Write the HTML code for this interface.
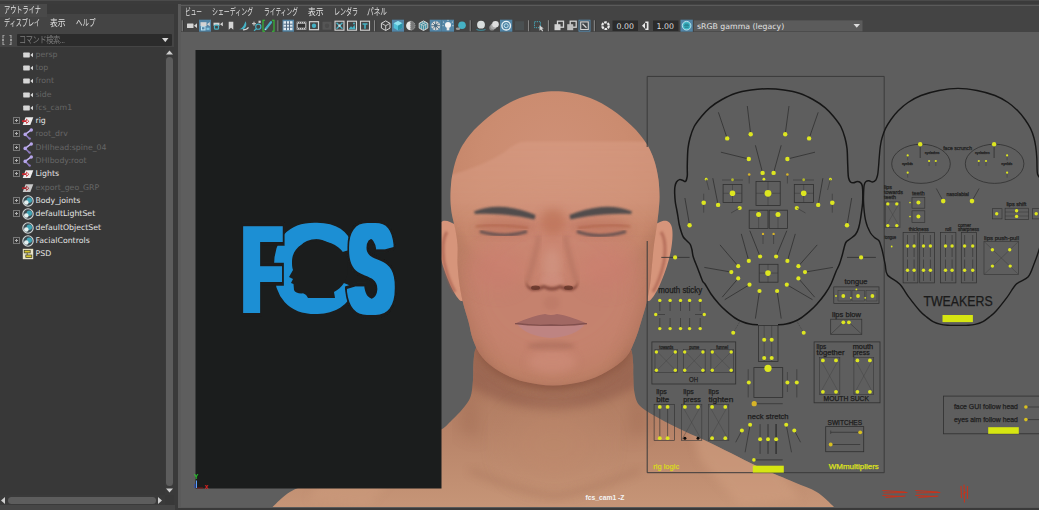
<!DOCTYPE html>
<html lang="ja">
<head>
<meta charset="utf-8">
<title>Maya FCS</title>
<style>
html,body{margin:0;padding:0;}
body{width:1039px;height:510px;overflow:hidden;background:#444444;position:relative;
 font-family:"Liberation Sans","Noto Sans CJK JP",sans-serif;font-size:11px;color:#dcdcdc;}
.abs{position:absolute;}
.jp{display:inline-block;transform-origin:0 50%;font-size:9px;white-space:nowrap;}
#topstrip{left:0;top:0;width:1039px;height:4px;background:#3b3b3b;}
#topline{left:0;top:0;width:1039px;height:1px;background:#4a4a4a;}
/* outliner */
#ol{left:0;top:4px;width:174px;height:501px;background:#444444;}
#oltabbar{left:0;top:0;width:174px;height:10.3px;background:#3a3a3a;}
#oltab{left:0;top:0;width:47px;height:13px;background:#494949;color:#e6e6e6;font-size:9.5px;line-height:13px;white-space:nowrap;}
#oltab span{position:absolute;left:3.5px;top:0;}
#olmenu{left:0;top:13px;width:174px;height:14px;font-size:9.5px;line-height:12px;color:#e0e0e0;white-space:nowrap;}
#olmenu span{position:absolute;top:0;}
#olsearch{left:17px;top:30px;width:155px;height:12px;background:#2b2b2b;border-radius:1px;}
#olsearch span{position:absolute;left:3px;top:0;font-size:9.5px;line-height:12px;color:#7d7d7d;white-space:nowrap;letter-spacing:-0.5px;}
#ollist{left:0;top:43px;width:174px;height:458px;background:#383838;}
.row{position:absolute;left:0;width:165px;height:13.3px;line-height:13.3px;font-size:7.8px;font-family:"DejaVu Sans","Liberation Sans",sans-serif;white-space:nowrap;}
.row .t{position:absolute;left:35.5px;top:0;}
.dim{color:#666666;}
.lit{color:#e4e4e4;}
.plus{position:absolute;left:12.500px;top:3px;width:5px;height:5px;border:1px solid #777;box-sizing:content-box;}
.plus:before{content:"";position:absolute;left:1px;top:2px;width:3px;height:1px;background:#b0b0b0;}
.plus:after{content:"";position:absolute;left:2px;top:1px;width:1px;height:3px;background:#b0b0b0;}
.ic{position:absolute;left:22px;top:1px;width:12px;height:12px;}
/* viewport panel */
#gap{left:174px;top:4px;width:4px;height:506px;background:#3a3a3a;}
#vp{left:178px;top:4px;width:861px;height:504px;background:#444444;border-bottom:1px solid #5a5a5a;box-sizing:border-box;}
#vptop{left:0;top:0.500px;width:861px;height:1.300px;background:#5a5a5a;}
#vpborderL{left:0;top:0;width:3px;height:504px;background:#5a5a5a;}
#vpmenu{left:5px;top:2px;height:12px;font-size:9.5px;line-height:12px;color:#e0e0e0;white-space:nowrap;}
#vpmenu span{position:absolute;top:0;}
#view{left:3px;top:28px;width:858px;height:475px;background:#5e5e5e;overflow:hidden;}
#bottom{left:0;top:505px;width:175px;height:5px;background:#464646;}
#bottom2{left:175px;top:508px;width:864px;height:2px;background:#3a3a3a;}
</style>
</head>
<body>
<div id="topstrip" class="abs"></div>
<div id="topline" class="abs"></div>

<div id="ol" class="abs">
  <div id="oltabbar" class="abs"></div>
  <div id="oltab" class="abs"><span class="jp" style="left:3.5px;transform:scaleX(0.685);">アウトライナ</span></div>
  <div id="olmenu" class="abs"><span class="jp" style="left:3.5px;transform:scaleX(0.676);">ディスプレイ</span><span class="jp" style="left:49.5px;transform:scaleX(0.861);">表示</span><span class="jp" style="left:75.5px;transform:scaleX(0.722);">ヘルプ</span></div>
  <svg class="abs" style="left:1px;top:29px" width="14" height="14" viewBox="0 0 14 14"><path d="M3.5 2.5h-1.5v3M2 8.5v3h1.5M8.500 2.500h1.500v3M10 8.500v3h-1.500" fill="none" stroke="#9a9a9a" stroke-width="1.2"/><path d="M1 6h2v2h-2zM9 6h2v2h-2z" fill="#9a9a9a"/></svg>
  <div id="olsearch" class="abs"><span class="jp" style="left:2px;transform:scaleX(0.80);font-size:9px">コマンド検索...</span>
    <svg class="abs" style="right:3.5px;top:4px" width="6.5" height="4.2" viewBox="0 0 8 5"><path d="M0 0h8L4 5z" fill="#d8d8d8"/></svg>
  </div>
  <div id="ollist" class="abs">
    <svg width="0" height="0" style="position:absolute"><defs>
<symbol id="i-cam" viewBox="0 0 12 12"><rect x="1.2" y="3.6" width="6.6" height="4.8" rx="0.6" fill="#d6d6d6"/><path d="M8.300 6L11 3.800v4.400z" fill="#d6d6d6"/></symbol>
<symbol id="i-xf" viewBox="0 0 12 12"><path d="M3.600 2.200H11.300L8.300 10H0.700z" fill="#ececec"/><path d="M0 5.300h4.200v-1.800l3 2.700-3 2.700v-1.800h-4.200z" fill="#c8242c"/><circle cx="5.300" cy="6.200" r="0.900" fill="#ececec"/></symbol>
<symbol id="i-xfd" viewBox="0 0 12 12"><path d="M3.600 2.200H11.300L8.300 10H0.700z" fill="#c9c9c9"/><path d="M0 5.300h4.200v-1.800l3 2.700-3 2.700v-1.800h-4.200z" fill="#a3242a"/><circle cx="5.300" cy="6.200" r="0.900" fill="#c9c9c9"/></symbol>
<symbol id="i-jt" viewBox="0 0 12 12"><path d="M9.300 1.800L3.200 6.400 7.600 10.800" fill="none" stroke="#8d7ac0" stroke-width="1.600"/><path d="M9.300 1.800L3.200 6.400" stroke="#c9bdf0" stroke-width="1.100"/><circle cx="9.300" cy="2" r="1.700" fill="#b6a5ea"/><circle cx="3.200" cy="6.400" r="1.800" fill="#b6a5ea"/><circle cx="7.700" cy="10.600" r="1.200" fill="#8d7ac0"/></symbol>
<symbol id="i-set" viewBox="0 0 12 12"><circle cx="6" cy="6" r="5.200" fill="#3b4a50" stroke="#d2d6d6" stroke-width="1.100"/><circle cx="7.300" cy="5.200" r="2.700" fill="#3fa3b4"/><circle cx="4.300" cy="7.500" r="2.300" fill="#e4f0f0"/></symbol>
<symbol id="i-psd" viewBox="0 0 12 12"><rect x="0.800" y="0.800" width="10.400" height="10.400" fill="#e8e4c8"/><rect x="2.200" y="2.300" width="6" height="2.600" fill="#d8c62a" stroke="#3a3a2a" stroke-width="0.700"/><rect x="3.800" y="7" width="6" height="2.600" fill="#d8c62a" stroke="#3a3a2a" stroke-width="0.700"/><path d="M5.200 4.900v2.100" stroke="#3a3a2a" stroke-width="0.700"/></symbol>
</defs></svg>
<div class="row dim" style="top:0.65px"><svg class="ic"><use href="#i-cam"/></svg><span class="t">persp</span></div>
    <div class="row dim" style="top:13.95px"><svg class="ic"><use href="#i-cam"/></svg><span class="t">top</span></div>
    <div class="row dim" style="top:27.25px"><svg class="ic"><use href="#i-cam"/></svg><span class="t">front</span></div>
    <div class="row dim" style="top:40.55px"><svg class="ic"><use href="#i-cam"/></svg><span class="t">side</span></div>
    <div class="row dim" style="top:53.85px"><svg class="ic"><use href="#i-cam"/></svg><span class="t">fcs_cam1</span></div>
    <div class="row lit" style="top:67.15px"><i class="plus"></i><svg class="ic"><use href="#i-xf"/></svg><span class="t">rig</span></div>
    <div class="row dim" style="top:80.45px"><i class="plus"></i><svg class="ic"><use href="#i-jt"/></svg><span class="t">root_drv</span></div>
    <div class="row dim" style="top:93.75px"><i class="plus"></i><svg class="ic"><use href="#i-jt"/></svg><span class="t">DHIhead:spine_04</span></div>
    <div class="row dim" style="top:107.05px"><i class="plus"></i><svg class="ic"><use href="#i-jt"/></svg><span class="t">DHIbody:root</span></div>
    <div class="row lit" style="top:120.35px"><i class="plus"></i><svg class="ic"><use href="#i-xf"/></svg><span class="t">Lights</span></div>
    <div class="row dim" style="top:133.65px"><svg class="ic"><use href="#i-xfd"/></svg><span class="t">export_geo_GRP</span></div>
    <div class="row lit" style="top:146.95px"><i class="plus"></i><svg class="ic"><use href="#i-set"/></svg><span class="t">Body_joints</span></div>
    <div class="row lit" style="top:160.25px"><i class="plus"></i><svg class="ic"><use href="#i-set"/></svg><span class="t">defaultLightSet</span></div>
    <div class="row lit" style="top:173.55px"><svg class="ic"><use href="#i-set"/></svg><span class="t">defaultObjectSet</span></div>
    <div class="row lit" style="top:186.85px"><i class="plus"></i><svg class="ic"><use href="#i-set"/></svg><span class="t">FacialControls</span></div>
    <div class="row lit" style="top:200.15px"><svg class="ic"><use href="#i-psd"/></svg><span class="t">PSD</span></div>
<div class="abs" style="left:165px;top:0;width:9px;height:448px;background:#3a3a3a"></div>
    <svg class="abs" style="left:166px;top:3px" width="7" height="5" viewBox="0 0 7 5"><path d="M0 4.500L3.500 0.500 7 4.500z" fill="#cfcfcf"/></svg>
    <div class="abs" style="left:166px;top:10px;width:7px;height:429px;background:#5d5d5d;border-radius:3.5px"></div>
    <svg class="abs" style="left:166px;top:441px" width="7" height="5" viewBox="0 0 7 5"><path d="M0 0.500L3.500 4.500 7 0.500z" fill="#cfcfcf"/></svg>
    <div class="abs" style="left:0;top:448px;width:165px;height:10px;background:#3a3a3a"></div>
    <svg class="abs" style="left:1px;top:449.500px" width="4" height="7" viewBox="0 0 4 7"><path d="M4 0L0 3.500 4 7z" fill="#cfcfcf"/></svg>
    <div class="abs" style="left:8px;top:449.500px;width:148px;height:7px;background:#5d5d5d;border-radius:3.5px"></div>
    <svg class="abs" style="left:158px;top:449.500px" width="4" height="7" viewBox="0 0 4 7"><path d="M0 0L4 3.500 0 7z" fill="#cfcfcf"/></svg>
  </div>
</div>

<div id="gap" class="abs"></div>
<div id="vp" class="abs">
  <div id="vpborderL" class="abs"></div><div id="vptop" class="abs"></div>
  <div id="vpmenu" class="abs"><span class="jp" style="left:1.5px;transform:scaleX(0.630);">ビュー</span><span class="jp" style="left:29.3px;transform:scaleX(0.659);">シェーディング</span><span class="jp" style="left:80.5px;transform:scaleX(0.639);">ライティング</span><span class="jp" style="left:124.5px;transform:scaleX(0.861);">表示</span><span class="jp" style="left:150.5px;transform:scaleX(0.667);">レンダラ</span><span class="jp" style="left:183.8px;transform:scaleX(0.741);">パネル</span></div>
  <!-- TB0 --><svg class="abs" style="left:0;top:13.5px" width="861" height="15" viewBox="0 0 861 15"><path d="M4.3 2.2v11" stroke="#858585" stroke-width="1.2"/><path d="M5.3 2.2v11" stroke="#333333" stroke-width="0.8"/><g transform="translate(14.0 7.7)"><rect x="-5" y="-2.2" width="6.500" height="4.600" rx="0.500" fill="#d4d4d4"/><path d="M2 0L5 -2.400v4.800z" fill="#d4d4d4"/></g><rect x="21.0" y="1.7" width="12.0" height="12" fill="#5285a6"/><g transform="translate(27.0 7.7)"><rect x="-4.500" y="-3.500" width="6" height="4" fill="#d4d4d4"/><path d="M2 -1.500L4.800 -3.600v4.200z" fill="#d4d4d4"/><rect x="-3.500" y="1" width="3.500" height="3.200" fill="none" stroke="#bfe3f2" stroke-width="1"/><rect x="1.500" y="2" width="3" height="2.200" fill="#7fc6e0"/></g><g transform="translate(40.0 7.7)"><rect x="-4.500" y="-3" width="6" height="3" fill="#d4d4d4"/><path d="M2 -1.500L4.800 -3.600v4.200z" fill="#d4d4d4"/><rect x="-3.500" y="-0.500" width="4" height="4" rx="1" fill="#444" stroke="#45b1c4" stroke-width="1.200"/></g><g transform="translate(53.0 7.7)"><path d="M-2.300 -4h4.600v8l-2.300-2-2.300 2z" fill="#d4d4d4"/></g><g transform="translate(66.0 7.7)"><path d="M-5 3.500C-2 3 0 0 1.500-4.500 3 -2 2.500 1.500 -0.500 3.500z" fill="#45b1c4"/><path d="M-1 4.200c2.500 0 4.500-1 5.500-2.500" stroke="#d4d4d4" stroke-width="1.100" fill="none"/></g><g transform="translate(79.0 7.7)"><circle cx="1.300" cy="1" r="2.600" fill="none" stroke="#45b1c4" stroke-width="1.100"/><path d="M-0.500 3L-3 5" stroke="#45b1c4" stroke-width="1.200"/><path d="M-5-2h4M-3-4v4" stroke="#d4d4d4" stroke-width="1"/><rect x="1.500" y="-5" width="2.200" height="2.200" fill="#d4d4d4"/></g><g transform="translate(90.5 7.7)"><path d="M-3.500 -5.500h-2v11h2M3.500 -5.500h2v11h-2" fill="none" stroke="#35c435" stroke-width="1.100"/><path d="M-3 3.500L2.500 -3.500" stroke="#45b1c4" stroke-width="2.200" stroke-linecap="round"/><path d="M-3.500 4.300l0.800-1.200" stroke="#ddd" stroke-width="1"/></g><path d="M100.0 2.2v11" stroke="#858585" stroke-width="1.2"/><path d="M101.0 2.2v11" stroke="#333333" stroke-width="0.8"/><rect x="104.5" y="1.7" width="11.5" height="12" fill="#5285a6"/><g transform="translate(110.0 7.7)"><rect x="-4.500" y="-4.500" width="9" height="9" fill="#dfeaf0"/><path d="M-4.500 -1.500h9M-4.500 1.500h9M-1.500 -4.500v9M1.500 -4.500v9" stroke="#44607a" stroke-width="0.900"/></g><g transform="translate(123.5 7.7)"><rect x="-4.800" y="-4" width="9.600" height="8" fill="#cfcfcf"/><rect x="-3.800" y="-2" width="7.600" height="4" fill="#333"/><path d="M-4.500 -3h9M-4.500 3h9" stroke="#444" stroke-width="0.800" stroke-dasharray="1 1"/></g><g transform="translate(136.0 7.7)"><rect x="-4.500" y="-4" width="9" height="8" fill="none" stroke="#d4d4d4" stroke-width="1.200"/><circle r="2.200" fill="#45b1c4"/></g><g transform="translate(149.0 7.7)"><rect x="-4.500" y="-4" width="9" height="8" fill="#555"/><circle r="2.200" fill="#4b4b4b"/></g><g transform="translate(161.5 7.7)"><rect x="-4.500" y="-4.500" width="9" height="9" fill="none" stroke="#d4d4d4" stroke-width="1.100"/><path d="M-3 -3L3 3M3 -3L-3 3" stroke="#45b1c4" stroke-width="1.400"/><circle r="1.200" fill="#d4d4d4"/></g><g transform="translate(174.0 7.7)"><rect x="-4.500" y="-4.500" width="9" height="9" fill="none" stroke="#d4d4d4" stroke-width="1.100"/><path d="M-3.500 3.500L-1 0.500 0.500 2 2.500 -1 3.500 3.500z" fill="#45b1c4"/><circle cx="2" cy="-2.200" r="1" fill="#45b1c4"/></g><g transform="translate(187.0 7.7)"><rect x="-4.500" y="-4.500" width="9" height="9" fill="none" stroke="#d4d4d4" stroke-width="1.100"/><path d="M-2.500 -2.500h5v1.500h-1.700v4h-1.600v-4h-1.700z" fill="#45b1c4"/></g><path d="M196.6 2.2v11" stroke="#858585" stroke-width="1.2"/><path d="M197.6 2.2v11" stroke="#333333" stroke-width="0.8"/><g transform="translate(207.7 7.7)"><path d="M0 -4.800L4.300 -2.400V2.400L0 4.800-4.300 2.400V-2.400z" fill="none" stroke="#d4d4d4" stroke-width="1"/><path d="M-4.300 -2.400L0 0 4.300 -2.400M0 0V4.800" fill="none" stroke="#d4d4d4" stroke-width="0.900"/></g><rect x="214.0" y="1.7" width="12.0" height="12" fill="#5285a6"/><g transform="translate(220.0 7.7)"><path d="M0 -4.800L4.300 -2.400V2.400L0 4.800-4.300 2.400V-2.400z" fill="#4fc0d8"/><path d="M0 -4.800L4.300 -2.400 0 0 -4.300 -2.400z" fill="#8fe0ee"/><path d="M0 0L4.300 -2.400V2.400L0 4.800z" fill="#2c93a8"/></g><g transform="translate(232.6 7.7)"><path d="M0 -4.500A4.500 4.500 0 0 0 0 4.500z" fill="#e6e6e6"/><path d="M0 -4.500A4.500 4.500 0 0 1 0 4.500z" fill="#777" stroke="#cfcfcf" stroke-width="0.600" stroke-dasharray="1 1"/></g><g transform="translate(245.5 7.7)"><path d="M0 -4.800L4.300 -2.400V2.400L0 4.800-4.300 2.400V-2.400z" fill="#3b8ea0" stroke="#d4d4d4" stroke-width="1"/><path d="M-4.300 -2.400L0 0 4.300 -2.400M0 0V4.800M-2.150 -3.600L2.150 -1.200V3.600M2.150 -3.600L-2.150 -1.200V3.600" fill="none" stroke="#d4d4d4" stroke-width="0.700"/></g><rect x="251.7" y="1.7" width="12.1" height="12" fill="#5285a6"/><g transform="translate(257.7 7.7)"><circle r="4.500" fill="#d8d8d8"/><path d="M-4.500 0h9M0 -4.500v9M-3.200 -3.200l6.400 6.400M3.200 -3.200l-6.400 6.400" stroke="#4a6a80" stroke-width="0.900"/><circle r="1.600" fill="#4a6a80"/></g><rect x="263.8" y="1.7" width="12.2" height="12" fill="#5285a6"/><g transform="translate(270.0 7.7)"><circle cy="-0.800" r="3" fill="#f4f4f4"/><rect x="-1.300" y="2" width="2.600" height="2.600" fill="#e8e8e8"/><path d="M-5 -4l1.200 1M5 -4l-1.200 1M0 -5.800v1.200M-5.500 0h1.200M5.500 0h-1.200" stroke="#e8e8e8" stroke-width="0.800"/></g><g transform="translate(283.0 7.7)"><circle cx="1" cy="-0.500" r="3.800" fill="#45b1c4"/><ellipse cx="-3" cy="3" rx="2.200" ry="1.300" fill="#9a9a9a"/></g><path d="M292.3 2.2v11" stroke="#858585" stroke-width="1.2"/><path d="M293.3 2.2v11" stroke="#333333" stroke-width="0.8"/><g transform="translate(303.0 7.7)"><circle cy="-1" r="3.900" fill="#d9dede"/><path d="M-4.500 3.500c2 1.500 7 1.500 9 0" stroke="#3f7f8c" stroke-width="1.300" fill="none"/></g><g transform="translate(316.0 7.7)"><circle cx="-2" cy="2" r="2.800" fill="#8a8a8a"/><circle cx="-0.500" cy="0.500" r="3" fill="#aaa"/><circle cx="1.500" cy="-1.500" r="3.300" fill="#dedede"/></g><rect x="322.0" y="1.7" width="12.3" height="12" fill="#5285a6"/><g transform="translate(328.2 7.7)"><circle r="4.300" fill="none" stroke="#e8f2f6" stroke-width="1.300"/><circle r="2" fill="none" stroke="#bfe0ec" stroke-width="1"/></g><g transform="translate(341.5 7.7)"><rect x="-4.500" y="-4.500" width="9" height="9" fill="#4a5052"/></g><path d="M350.6 2.2v11" stroke="#858585" stroke-width="1.2"/><path d="M351.6 2.2v11" stroke="#333333" stroke-width="0.8"/><g transform="translate(361.0 7.7)"><rect x="-4.500" y="-4" width="6" height="6" fill="none" stroke="#45b1c4" stroke-width="0.900" stroke-dasharray="1.300 0.900"/><path d="M0.500 -0.500l0 5.500 1.400-1.300 1.300 2 0.900-0.600-1.200-2 1.800-0.300z" fill="#d4d4d4"/></g><path d="M370.5 2.2v11" stroke="#858585" stroke-width="1.2"/><path d="M371.5 2.2v11" stroke="#333333" stroke-width="0.8"/><g transform="translate(381.0 7.7)"><rect x="-1.500" y="-4.500" width="6" height="6" fill="none" stroke="#d4d4d4" stroke-width="1.300"/><rect x="-4.500" y="-1.500" width="6" height="6" fill="#d4d4d4"/></g><g transform="translate(393.7 7.7)"><rect x="-1.500" y="-4.500" width="6" height="6" fill="none" stroke="#d4d4d4" stroke-width="1.300"/><rect x="-4.500" y="-1.500" width="6" height="6" fill="#bdbdbd"/></g><g transform="translate(406.5 7.7)"><rect x="-5.500" y="-5.500" width="11" height="11" fill="#3f4448" stroke="#5a8fb4" stroke-width="0.900"/><rect x="-3.800" y="-3.800" width="7.600" height="7.600" fill="none" stroke="#d4d4d4" stroke-width="1.100"/><path d="M-2 -2L2 2" stroke="#d4d4d4" stroke-width="1.300"/></g><path d="M416.4 2.2v11" stroke="#858585" stroke-width="1.2"/><path d="M417.4 2.2v11" stroke="#333333" stroke-width="0.8"/><g transform="translate(427.5 7.7)"><circle r="3.300" fill="none" stroke="#ececec" stroke-width="2.200" stroke-dasharray="2.600 0.850"/></g><rect x="434.5" y="2.5" width="25.500" height="10.500" fill="#2b2b2b"/><text x="447.2" y="10.6" font-size="7.800" fill="#dedede" text-anchor="middle" font-family="DejaVu Sans,Liberation Sans,sans-serif">0.00</text><g transform="translate(467.5 7.7)"><path d="M-3.500 0L-0.500 -3v6z" fill="#e8e8e8"/><path d="M-0.200 -4.200h3.200v8.400h-3.200v-1.500h1.500v-5.400h-1.500z" fill="#e8e8e8"/></g><rect x="475.0" y="2.5" width="25.500" height="10.500" fill="#2b2b2b"/><text x="487.2" y="10.6" font-size="7.800" fill="#dedede" text-anchor="middle" font-family="DejaVu Sans,Liberation Sans,sans-serif">1.00</text><rect x="502.5" y="1.7" width="12.3" height="12" fill="#5285a6"/><g transform="translate(508.6 7.7)"><circle r="4.300" fill="#3fb6c6" stroke="#bfeaf2" stroke-width="0.900"/><path d="M-2.500 0h5M-2 -1.500h4M-2 1.500h4" stroke="#1e6a78" stroke-width="0.800"/></g><rect x="516.0" y="2.4" width="168.500" height="11" fill="#5b5b5b"/><text x="519.0" y="10.5" font-size="7.800" fill="#e2e2e2" font-family="DejaVu Sans,Liberation Sans,sans-serif">sRGB gamma (legacy)</text><path d="M675.5 6.1h6.500l-3.250 3.600z" fill="#dcdcdc"/></svg><!-- TB1 -->
  <div id="view" class="abs">
    <!-- V0 --><svg class="abs" style="left:0;top:0" width="858" height="475" viewBox="181 32 858 475">
<defs>
<filter id="b2" x="-20%" y="-20%" width="140%" height="140%"><feGaussianBlur stdDeviation="2"/></filter>
<filter id="b1" x="-20%" y="-20%" width="140%" height="140%"><feGaussianBlur stdDeviation="1"/></filter>
<filter id="b05" x="-20%" y="-20%" width="140%" height="140%"><feGaussianBlur stdDeviation="0.6"/></filter>
<filter id="b4" x="-30%" y="-30%" width="160%" height="160%"><feGaussianBlur stdDeviation="4"/></filter>
<filter id="b8" x="-40%" y="-40%" width="180%" height="180%"><feGaussianBlur stdDeviation="8"/></filter>
<filter id="b14" x="-50%" y="-50%" width="200%" height="200%"><feGaussianBlur stdDeviation="14"/></filter>
<radialGradient id="gHead" cx="555" cy="165" r="125" gradientUnits="userSpaceOnUse" gradientTransform="translate(0 0)">
<stop offset="0" stop-color="#cf9178"/><stop offset="0.6" stop-color="#cb8c70"/><stop offset="0.9" stop-color="#c5866a"/><stop offset="1" stop-color="#bb7f64"/></radialGradient>
<linearGradient id="gBody" x1="0" y1="380" x2="0" y2="506" gradientUnits="userSpaceOnUse"><stop offset="0" stop-color="#af7a60"/><stop offset="0.4" stop-color="#b78368"/><stop offset="1" stop-color="#c69577"/></linearGradient>
<linearGradient id="gBand" x1="0" y1="141" x2="0" y2="236" gradientUnits="userSpaceOnUse"><stop offset="0" stop-color="#d79b83" stop-opacity="0.6"/><stop offset="0.6" stop-color="#d79b83" stop-opacity="0.5"/><stop offset="1" stop-color="#d79b83" stop-opacity="0"/></linearGradient>
<clipPath id="cHead"><path d="M555.0 91.3C560.0 91.3 565.2 91.7 570.0 92.5C574.8 93.3 579.7 94.7 584.0 96.0C588.3 97.3 592.2 98.8 596.0 100.5C599.8 102.2 603.5 104.4 607.0 106.5C610.5 108.6 613.7 110.8 617.0 113.3C620.3 115.8 623.8 118.7 627.0 121.5C630.2 124.3 633.2 126.9 636.0 130.0C638.8 133.1 641.7 136.7 644.0 140.0C646.3 143.3 648.2 146.2 650.0 150.0C651.8 153.8 653.6 158.0 655.0 163.0C656.4 168.0 657.8 174.3 658.5 180.0C659.2 185.7 659.5 191.7 659.5 197.0C659.5 202.3 659.0 206.8 658.5 212.0C658.0 217.2 657.2 222.5 656.5 228.0C655.8 233.5 654.8 238.8 654.0 245.0C653.2 251.2 652.7 258.3 652.0 265.0C651.3 271.7 650.9 278.7 650.0 285.0C649.1 291.3 648.0 296.8 646.5 303.0C645.0 309.2 642.9 315.8 641.0 322.0C639.1 328.2 637.5 334.2 635.0 340.0C632.5 345.8 630.7 351.8 626.0 357.0C621.3 362.2 614.2 367.4 607.0 371.5C599.8 375.6 592.0 379.2 583.0 381.5C574.0 383.8 562.9 385.5 553.0 385.5C543.1 385.5 532.5 383.8 523.6 381.5C514.7 379.2 506.5 375.6 499.6 371.5C492.7 367.4 486.5 362.2 482.1 357.0C477.7 351.8 475.3 345.8 473.1 340.0C470.8 334.2 470.3 328.2 468.6 322.0C466.9 315.8 464.6 309.2 463.1 303.0C461.6 296.8 460.5 291.3 459.6 285.0C458.7 278.7 457.9 271.7 457.6 265.0C457.2 258.3 457.9 251.2 457.5 245.0C457.1 238.8 456.0 233.5 455.0 228.0C454.0 222.5 452.2 217.2 451.5 212.0C450.8 206.8 450.5 202.3 450.5 197.0C450.5 191.7 450.8 185.7 451.5 180.0C452.2 174.3 453.6 168.0 455.0 163.0C456.4 158.0 458.2 153.8 460.0 150.0C461.8 146.2 463.7 143.3 466.0 140.0C468.3 136.7 471.2 133.1 474.0 130.0C476.8 126.9 479.8 124.3 483.0 121.5C486.2 118.7 489.7 115.8 493.0 113.3C496.3 110.8 499.5 108.6 503.0 106.5C506.5 104.4 510.2 102.2 514.0 100.5C517.8 98.8 521.7 97.3 526.0 96.0C530.3 94.7 535.2 93.3 540.0 92.5C544.8 91.7 550.0 91.3 555.0 91.3z"/></clipPath>
<clipPath id="cBody"><path d="M268.6 512.0C269.6 510.8 271.0 508.3 274.6 505.0C278.1 501.7 283.5 495.8 289.9 492.0C296.3 488.2 303.9 485.8 312.9 482.0C321.8 478.2 334.2 473.2 343.6 469.0C352.9 464.8 360.5 460.7 369.0 456.5C377.5 452.3 385.7 447.9 394.6 443.7C403.5 439.4 415.0 433.3 422.6 431.0C430.2 428.7 435.1 431.8 440.0 430.0C444.9 428.2 448.2 423.6 452.0 420.0C455.8 416.4 459.9 412.3 463.0 408.5C466.1 404.7 468.8 401.8 470.5 397.0C472.2 392.2 472.5 385.8 473.0 380.0C473.5 374.2 473.0 367.3 473.5 362.0C474.0 356.7 473.9 352.5 476.0 348.0C478.1 343.5 473.1 343.0 486.0 335.0C498.9 327.0 531.0 300.0 553.3 300.0C575.6 300.0 607.1 327.0 620.0 335.0C632.9 343.0 628.3 343.5 630.5 348.0C632.7 352.5 632.5 357.3 633.0 362.0C633.5 366.7 633.0 370.8 633.3 376.0C633.5 381.2 633.4 388.0 634.5 393.0C635.6 398.0 636.0 401.8 640.0 406.0C644.0 410.2 651.2 413.8 658.5 418.0C665.8 422.2 675.1 426.7 684.0 431.0C692.9 435.3 703.1 439.4 712.0 443.7C720.9 447.9 729.1 452.3 737.6 456.5C746.1 460.7 753.6 464.8 763.0 469.0C772.4 473.2 784.8 478.2 793.7 482.0C802.7 485.8 810.3 488.2 816.7 492.0C823.1 495.8 828.5 501.7 832.0 505.0C835.5 508.3 837.0 510.8 838.0 512.0z"/></clipPath>
</defs>
<rect x="181" y="32" width="858" height="476" fill="#5e5e5e"/>
<path d="M268.6 512.0C269.6 510.8 271.0 508.3 274.6 505.0C278.1 501.7 283.5 495.8 289.9 492.0C296.3 488.2 303.9 485.8 312.9 482.0C321.8 478.2 334.2 473.2 343.6 469.0C352.9 464.8 360.5 460.7 369.0 456.5C377.5 452.3 385.7 447.9 394.6 443.7C403.5 439.4 415.0 433.3 422.6 431.0C430.2 428.7 435.1 431.8 440.0 430.0C444.9 428.2 448.2 423.6 452.0 420.0C455.8 416.4 459.9 412.3 463.0 408.5C466.1 404.7 468.8 401.8 470.5 397.0C472.2 392.2 472.5 385.8 473.0 380.0C473.5 374.2 473.0 367.3 473.5 362.0C474.0 356.7 473.9 352.5 476.0 348.0C478.1 343.5 473.1 343.0 486.0 335.0C498.9 327.0 531.0 300.0 553.3 300.0C575.6 300.0 607.1 327.0 620.0 335.0C632.9 343.0 628.3 343.5 630.5 348.0C632.7 352.5 632.5 357.3 633.0 362.0C633.5 366.7 633.0 370.8 633.3 376.0C633.5 381.2 633.4 388.0 634.5 393.0C635.6 398.0 636.0 401.8 640.0 406.0C644.0 410.2 651.2 413.8 658.5 418.0C665.8 422.2 675.1 426.7 684.0 431.0C692.9 435.3 703.1 439.4 712.0 443.7C720.9 447.9 729.1 452.3 737.6 456.5C746.1 460.7 753.6 464.8 763.0 469.0C772.4 473.2 784.8 478.2 793.7 482.0C802.7 485.8 810.3 488.2 816.7 492.0C823.1 495.8 828.5 501.7 832.0 505.0C835.5 508.3 837.0 510.8 838.0 512.0z" fill="url(#gBody)"/>
<g clip-path="url(#cBody)">
<path d="M470 340Q480 372 520 390Q553 399 586 390Q626 372 636 340L640 385Q600 408 553 411Q506 408 466 385z" fill="#8e5a48" opacity="0.55" filter="url(#b4)"/>
<ellipse cx="554" cy="445" rx="45" ry="35" fill="#bd886c" opacity="0.5" filter="url(#b14)"/>
<path d="M470 380L480 440 460 430z" fill="#96624c" opacity="0.4" filter="url(#b8)"/>
<path d="M638 380L628 440 648 430z" fill="#96624c" opacity="0.4" filter="url(#b8)"/>
<path d="M690 425L780 470 800 500 740 506 700 460z" fill="#cf9d7f" opacity="0.6" filter="url(#b4)"/>
<path d="M418 425L328 470 308 500 368 506 408 460z" fill="#cf9d7f" opacity="0.45" filter="url(#b4)"/>
<path d="M470 470Q520 492 554 496Q588 492 640 470" fill="none" stroke="#a06c54" stroke-width="5" opacity="0.45" filter="url(#b4)"/>
</g>
<g clip-path="url(#cBody)"><path d="M555.0 91.3C560.0 91.3 565.2 91.7 570.0 92.5C574.8 93.3 579.7 94.7 584.0 96.0C588.3 97.3 592.2 98.8 596.0 100.5C599.8 102.2 603.5 104.4 607.0 106.5C610.5 108.6 613.7 110.8 617.0 113.3C620.3 115.8 623.8 118.7 627.0 121.5C630.2 124.3 633.2 126.9 636.0 130.0C638.8 133.1 641.7 136.7 644.0 140.0C646.3 143.3 648.2 146.2 650.0 150.0C651.8 153.8 653.6 158.0 655.0 163.0C656.4 168.0 657.8 174.3 658.5 180.0C659.2 185.7 659.5 191.7 659.5 197.0C659.5 202.3 659.0 206.8 658.5 212.0C658.0 217.2 657.2 222.5 656.5 228.0C655.8 233.5 654.8 238.8 654.0 245.0C653.2 251.2 652.7 258.3 652.0 265.0C651.3 271.7 650.9 278.7 650.0 285.0C649.1 291.3 648.0 296.8 646.5 303.0C645.0 309.2 642.9 315.8 641.0 322.0C639.1 328.2 637.5 334.2 635.0 340.0C632.5 345.8 630.7 351.8 626.0 357.0C621.3 362.2 614.2 367.4 607.0 371.5C599.8 375.6 592.0 379.2 583.0 381.5C574.0 383.8 562.9 385.5 553.0 385.5C543.1 385.5 532.5 383.8 523.6 381.5C514.7 379.2 506.5 375.6 499.6 371.5C492.7 367.4 486.5 362.2 482.1 357.0C477.7 351.8 475.3 345.8 473.1 340.0C470.8 334.2 470.3 328.2 468.6 322.0C466.9 315.8 464.6 309.2 463.1 303.0C461.6 296.8 460.5 291.3 459.6 285.0C458.7 278.7 457.9 271.7 457.6 265.0C457.2 258.3 457.9 251.2 457.5 245.0C457.1 238.8 456.0 233.5 455.0 228.0C454.0 222.5 452.2 217.2 451.5 212.0C450.8 206.8 450.5 202.3 450.5 197.0C450.5 191.7 450.8 185.7 451.5 180.0C452.2 174.3 453.6 168.0 455.0 163.0C456.4 158.0 458.2 153.8 460.0 150.0C461.8 146.2 463.7 143.3 466.0 140.0C468.3 136.7 471.2 133.1 474.0 130.0C476.8 126.9 479.8 124.3 483.0 121.5C486.2 118.7 489.7 115.8 493.0 113.3C496.3 110.8 499.5 108.6 503.0 106.5C506.5 104.4 510.2 102.2 514.0 100.5C517.8 98.8 521.7 97.3 526.0 96.0C530.3 94.7 535.2 93.3 540.0 92.5C544.8 91.7 550.0 91.3 555.0 91.3z" transform="translate(0 6)" fill="#84503e" opacity="0.75" filter="url(#b4)"/></g>
<path d="M652.0 228.0C653.7 224.2 657.5 223.2 660.0 222.0C662.5 220.8 665.1 220.3 667.0 221.0C668.9 221.7 670.6 223.5 671.5 226.0C672.4 228.5 672.6 232.0 672.5 236.0C672.4 240.0 671.9 245.0 671.0 250.0C670.1 255.0 668.7 260.7 667.0 266.0C665.3 271.3 663.0 277.3 661.0 282.0C659.0 286.7 657.0 290.8 655.0 294.0C653.0 297.2 650.5 300.7 649.0 301.0C647.5 301.3 646.2 301.2 646.0 296.0C645.8 290.8 647.3 278.5 648.0 270.0C648.7 261.5 649.3 252.0 650.0 245.0C650.7 238.0 650.3 231.8 652.0 228.0z" fill="#d6957b"/>
<path d="M458.0 228.0C456.3 224.2 452.5 223.2 450.0 222.0C447.5 220.8 444.9 220.3 443.0 221.0C441.1 221.7 439.4 223.5 438.5 226.0C437.6 228.5 437.4 232.0 437.5 236.0C437.6 240.0 438.1 245.0 439.0 250.0C439.9 255.0 441.3 260.7 443.0 266.0C444.7 271.3 447.0 277.3 449.0 282.0C451.0 286.7 453.0 290.8 455.0 294.0C457.0 297.2 459.5 300.7 461.0 301.0C462.5 301.3 463.8 301.2 464.0 296.0C464.2 290.8 462.7 278.5 462.0 270.0C461.3 261.5 460.7 252.0 460.0 245.0C459.3 238.0 459.7 231.8 458.0 228.0z" fill="#d6957b"/>
<path d="M661 232Q667 240 664 262Q660 280 653 292" fill="none" stroke="#a85e4e" stroke-width="3" opacity="0.7" filter="url(#b1)"/>
<path d="M447 232Q441 240 444 262Q448 280 455 292" fill="none" stroke="#a85e4e" stroke-width="3" opacity="0.7" filter="url(#b1)"/>
<path d="M555.0 91.3C560.0 91.3 565.2 91.7 570.0 92.5C574.8 93.3 579.7 94.7 584.0 96.0C588.3 97.3 592.2 98.8 596.0 100.5C599.8 102.2 603.5 104.4 607.0 106.5C610.5 108.6 613.7 110.8 617.0 113.3C620.3 115.8 623.8 118.7 627.0 121.5C630.2 124.3 633.2 126.9 636.0 130.0C638.8 133.1 641.7 136.7 644.0 140.0C646.3 143.3 648.2 146.2 650.0 150.0C651.8 153.8 653.6 158.0 655.0 163.0C656.4 168.0 657.8 174.3 658.5 180.0C659.2 185.7 659.5 191.7 659.5 197.0C659.5 202.3 659.0 206.8 658.5 212.0C658.0 217.2 657.2 222.5 656.5 228.0C655.8 233.5 654.8 238.8 654.0 245.0C653.2 251.2 652.7 258.3 652.0 265.0C651.3 271.7 650.9 278.7 650.0 285.0C649.1 291.3 648.0 296.8 646.5 303.0C645.0 309.2 642.9 315.8 641.0 322.0C639.1 328.2 637.5 334.2 635.0 340.0C632.5 345.8 630.7 351.8 626.0 357.0C621.3 362.2 614.2 367.4 607.0 371.5C599.8 375.6 592.0 379.2 583.0 381.5C574.0 383.8 562.9 385.5 553.0 385.5C543.1 385.5 532.5 383.8 523.6 381.5C514.7 379.2 506.5 375.6 499.6 371.5C492.7 367.4 486.5 362.2 482.1 357.0C477.7 351.8 475.3 345.8 473.1 340.0C470.8 334.2 470.3 328.2 468.6 322.0C466.9 315.8 464.6 309.2 463.1 303.0C461.6 296.8 460.5 291.3 459.6 285.0C458.7 278.7 457.9 271.7 457.6 265.0C457.2 258.3 457.9 251.2 457.5 245.0C457.1 238.8 456.0 233.5 455.0 228.0C454.0 222.5 452.2 217.2 451.5 212.0C450.8 206.8 450.5 202.3 450.5 197.0C450.5 191.7 450.8 185.7 451.5 180.0C452.2 174.3 453.6 168.0 455.0 163.0C456.4 158.0 458.2 153.8 460.0 150.0C461.8 146.2 463.7 143.3 466.0 140.0C468.3 136.7 471.2 133.1 474.0 130.0C476.8 126.9 479.8 124.3 483.0 121.5C486.2 118.7 489.7 115.8 493.0 113.3C496.3 110.8 499.5 108.6 503.0 106.5C506.5 104.4 510.2 102.2 514.0 100.5C517.8 98.8 521.7 97.3 526.0 96.0C530.3 94.7 535.2 93.3 540.0 92.5C544.8 91.7 550.0 91.3 555.0 91.3z" fill="url(#gHead)"/>
<g clip-path="url(#cHead)">
<ellipse cx="553" cy="290" rx="95" ry="85" fill="#cb8473" opacity="0.65" filter="url(#b14)"/>
<path d="M440 180Q452 300 500 395L430 400z" fill="#a86c56" opacity="0.55" filter="url(#b8)"/>
<path d="M668 180Q656 300 608 395L678 400z" fill="#a86c56" opacity="0.55" filter="url(#b8)"/>
<path d="M440 178Q480 168 505 152Q515 142 526 141.500L670 141.500V236H440z" fill="url(#gBand)" filter="url(#b1)"/>
<ellipse cx="506" cy="227" rx="30" ry="9" fill="#b8705a" opacity="0.55" filter="url(#b4)"/>
<ellipse cx="600" cy="227" rx="30" ry="9" fill="#b8705a" opacity="0.55" filter="url(#b4)"/>
<ellipse cx="553" cy="222" rx="13" ry="13" fill="#b86c50" opacity="0.55" filter="url(#b4)"/>
<ellipse cx="498" cy="270" rx="28" ry="22" fill="#cc7c70" opacity="0.4" filter="url(#b8)"/>
<ellipse cx="606" cy="270" rx="28" ry="22" fill="#cc7c70" opacity="0.4" filter="url(#b8)"/>
<path d="M474 211.500Q488 205.500 505 207Q522 209 535.500 215L534.500 219.500Q518 215.500 502 214.500Q486 213.500 475 214z" fill="#47464a" opacity="0.92" filter="url(#b1)"/>
<path d="M632 211.500Q618 205.500 601 207Q584 209 569.500 215L570.500 219.500Q588 215.500 604 214.500Q620 213.500 631 214z" fill="#47464a" opacity="0.92" filter="url(#b1)"/>
<path d="M476 226.500Q500 223.500 528 228" fill="none" stroke="#a85c40" stroke-width="1.6" opacity="0.7" filter="url(#b1)"/>
<path d="M630 226.500Q606 223.500 578 228" fill="none" stroke="#a85c40" stroke-width="1.6" opacity="0.7" filter="url(#b1)"/>
<path d="M480 231.500Q492 235 505 235Q518 234.500 527 231.500" fill="none" stroke="#5a4c4e" stroke-width="3" opacity="0.85" filter="url(#b1)"/>
<path d="M626 231.500Q613 235.500 599 235.500Q586 235 577 231.500" fill="none" stroke="#5a4c4e" stroke-width="3" opacity="0.85" filter="url(#b1)"/>
<path d="M539 236Q534 262 527 283" fill="none" stroke="#a86a58" stroke-width="5" opacity="0.45" filter="url(#b2)"/>
<path d="M565 236Q570 262 577 283" fill="none" stroke="#a86a58" stroke-width="5" opacity="0.45" filter="url(#b2)"/>
<ellipse cx="552" cy="266" rx="9" ry="18" fill="#d19684" opacity="0.7" filter="url(#b4)"/>
<ellipse cx="552" cy="281" rx="12" ry="6" fill="#cf8e7e" opacity="0.7" filter="url(#b2)"/>
<path d="M526 281Q525 289 533 291Q540 291 544 288.500Q552 293 560 288.500Q564 291 571 291Q579 289 578 281Q577 287 570 287.500Q564 286 560 285Q552 289 544 285Q540 286 534 287.500Q527 287 526 281z" fill="#84493c" opacity="0.9" filter="url(#b1)"/>
<ellipse cx="535.500" cy="287.800" rx="4.500" ry="2.200" fill="#66352c" opacity="0.85" filter="url(#b05)"/>
<ellipse cx="568.500" cy="287.800" rx="4.500" ry="2.200" fill="#66352c" opacity="0.85" filter="url(#b05)"/>
<ellipse cx="551.500" cy="303" rx="8" ry="7" fill="#b87664" opacity="0.5" filter="url(#b2)"/>
<path d="M515 323.500Q532 316 545 314Q551 316 557 314Q570 316 587 323.500Q570 326 551 325Q532 326 515 323.500z" fill="#a16763" filter="url(#b05)"/>
<path d="M517 324Q533 326.500 551 325.500Q570 326.500 585 324Q576 336.500 551 338Q527 336.500 517 324z" fill="#be8482" filter="url(#b05)"/>
<path d="M515 323.500Q533 326 551 325Q570 326 587 323.500" fill="none" stroke="#7a4a48" stroke-width="1.3" opacity="0.85" filter="url(#b05)"/>
<ellipse cx="551" cy="346" rx="24" ry="4.500" fill="#a86c5a" opacity="0.55" filter="url(#b2)"/>
<ellipse cx="552" cy="362" rx="24" ry="11" fill="#cf8e7c" opacity="0.6" filter="url(#b4)"/>
<path d="M474 345Q486 366 505 376Q530 386 553 387Q576 386 601 376Q620 366 632 345L640 400 466 400z" fill="#a06652" opacity="0.5" filter="url(#b4)"/>
</g>
<!-- GUIPOS -->
<rect x="195.500" y="50" width="246" height="438.500" fill="#1b1d1d"/>
<filter id="dF" x="230" y="210" width="180" height="120" filterUnits="userSpaceOnUse"><feMorphology operator="dilate" radius="4.00 1.20"/></filter>
<filter id="dC" x="230" y="210" width="180" height="120" filterUnits="userSpaceOnUse"><feMorphology operator="dilate" radius="1.30 1.00"/></filter>
<filter id="dS" x="230" y="210" width="180" height="120" filterUnits="userSpaceOnUse"><feMorphology operator="dilate" radius="3.50 0.60"/></filter>
<g filter="url(#dC)"><text transform="matrix(1.1998 0 0 1.2650 270.00 312.00)" font-family="Liberation Sans,sans-serif" font-weight="bold" font-size="100" fill="#1f8fd4">C</text></g>
<path d="M292 262C292 248 303 241 318 241C336 241 348 252 348 268C348 280 342 288 334 292L335 298 308 298 305 293C300 294 295 293 294 290L293.500 284 291 283 293 279 289 277 293 270C292 267 292 265 292 262z" fill="#1b1d1d"/>
<g filter="url(#dF)"><text transform="matrix(0.6227 0 0 1.2155 243.00 312.00)" font-family="Liberation Sans,sans-serif" font-weight="bold" font-size="100" fill="#1f8fd4" stroke="#1b1d1d" stroke-width="6">F</text></g>
<g filter="url(#dF)"><text transform="matrix(0.6227 0 0 1.2155 243.00 312.00)" font-family="Liberation Sans,sans-serif" font-weight="bold" font-size="100" fill="#1f8fd4">F</text></g>
<g filter="url(#dS)"><text transform="matrix(0.6655 0 0 1.2646 349.00 313.00)" font-family="Liberation Sans,sans-serif" font-weight="bold" font-size="100" fill="#1f8fd4" stroke="#1b1d1d" stroke-width="5">S</text></g>
<g filter="url(#dS)"><text transform="matrix(0.6655 0 0 1.2646 349.00 313.00)" font-family="Liberation Sans,sans-serif" font-weight="bold" font-size="100" fill="#1f8fd4">S</text></g>
<g font-family="Liberation Sans,sans-serif">
<path d="M647.200 147V76.400H884.200V472.700H647.200V241" stroke="#3a3a3a" stroke-width="1" fill="none"/>
<path d="M758.0 324.8C756.7 324.7 752.6 324.5 750.0 324.0C747.4 323.5 744.8 322.7 742.3 321.7C739.8 320.7 737.6 319.7 735.0 318.0C732.4 316.3 729.3 313.7 726.6 311.4C723.9 309.1 721.6 306.9 719.0 304.0C716.4 301.1 713.3 297.3 711.0 294.0C708.7 290.7 706.4 286.2 705.0 284.0C703.6 281.8 703.6 283.4 702.5 281.0C701.4 278.6 699.7 273.7 698.2 269.7C696.7 265.7 694.3 260.3 693.3 257.0C692.3 253.7 692.5 252.1 692.0 250.0C691.5 247.9 691.1 246.0 690.3 244.5C689.5 243.0 688.2 242.2 687.0 241.0C685.8 239.8 684.3 238.7 683.3 237.0C682.3 235.3 681.7 233.1 681.0 231.0C680.3 228.9 679.7 226.8 679.2 224.5C678.7 222.2 678.4 219.6 678.0 217.0C677.6 214.4 677.1 211.5 676.6 209.0C676.1 206.5 675.6 204.5 675.3 202.0C675.0 199.5 674.8 196.5 674.7 194.0C674.6 191.5 674.6 189.0 674.9 187.0C675.2 185.0 675.7 183.2 676.5 182.0C677.3 180.8 678.5 179.9 679.5 179.6C680.5 179.3 681.5 179.9 682.5 180.2C683.5 180.5 684.7 182.1 685.5 181.5C686.3 180.9 686.9 178.2 687.2 176.5C687.5 174.8 687.3 173.1 687.3 171.0C687.3 168.9 687.2 167.8 687.3 164.0C687.4 160.2 687.5 152.7 688.0 148.4C688.5 144.1 689.0 141.7 690.0 138.0C691.0 134.3 692.4 130.0 694.2 126.5C696.0 123.0 698.4 120.2 701.0 117.0C703.6 113.8 706.5 110.5 710.0 107.6C713.5 104.7 717.8 101.8 722.0 99.5C726.2 97.2 730.2 95.1 735.0 93.5C739.8 91.9 745.6 90.8 751.0 90.0C756.4 89.2 762.0 88.8 767.5 88.8C773.0 88.8 778.6 89.2 784.0 90.0C789.4 90.8 795.2 91.9 800.0 93.5C804.8 95.1 808.8 97.2 813.0 99.5C817.2 101.8 821.5 104.7 825.0 107.6C828.5 110.5 831.4 113.8 834.0 117.0C836.6 120.2 839.0 123.0 840.8 126.5C842.6 130.0 844.0 134.3 845.0 138.0C846.0 141.7 846.5 144.1 847.0 148.4C847.5 152.7 847.5 160.1 847.7 164.0C847.9 167.9 847.9 169.7 848.0 172.0C848.1 174.3 848.2 176.3 848.6 178.0C849.0 179.7 849.7 181.2 850.5 182.0C851.3 182.8 852.4 182.9 853.5 182.8C854.6 182.7 856.0 181.6 857.2 181.6C858.4 181.6 859.6 181.9 860.5 182.6C861.4 183.3 861.9 183.9 862.3 186.0C862.7 188.1 862.8 192.2 862.8 195.0C862.8 197.8 862.8 200.5 862.6 203.0C862.4 205.5 862.1 207.3 861.8 210.0C861.4 212.7 861.0 216.0 860.5 219.0C860.0 222.0 859.4 225.4 858.6 228.0C857.8 230.6 856.9 232.7 855.5 234.5C854.1 236.3 851.6 237.7 850.0 239.0C848.4 240.3 846.8 240.8 845.8 242.5C844.8 244.2 844.4 246.8 843.8 249.0C843.2 251.2 842.8 253.4 842.0 256.0C841.2 258.6 840.3 262.0 839.3 264.6C838.3 267.2 837.4 268.3 836.0 271.5C834.6 274.7 832.8 280.2 831.0 284.0C829.2 287.8 827.3 290.7 825.0 294.0C822.7 297.3 819.6 301.1 817.0 304.0C814.4 306.9 812.1 309.1 809.4 311.4C806.7 313.7 803.6 316.3 801.0 318.0C798.4 319.7 796.2 320.7 793.7 321.7C791.2 322.7 788.6 323.5 786.0 324.0C783.4 324.5 779.3 324.7 778.0 324.8" stroke="#161616" stroke-width="1.5" fill="none" stroke-linejoin="round"/>
<path d="M727.2 138.4L718.4 112.3" stroke="#303030" stroke-width="0.80" fill="none"/>
<circle cx="727.2" cy="138.4" r="2.20" fill="#dde620"/>
<path d="M750.7 134.3L747.3 106.0" stroke="#303030" stroke-width="0.80" fill="none"/>
<circle cx="750.7" cy="134.3" r="2.20" fill="#dde620"/>
<path d="M785.2 134.3L789.0 106.0" stroke="#303030" stroke-width="0.80" fill="none"/>
<circle cx="785.2" cy="134.3" r="2.20" fill="#dde620"/>
<path d="M809.1 138.4L818.2 112.3" stroke="#303030" stroke-width="0.80" fill="none"/>
<circle cx="809.1" cy="138.4" r="2.20" fill="#dde620"/>
<path d="M748.8 159.0L720.9 152.2" stroke="#303030" stroke-width="0.80" fill="none"/>
<circle cx="748.8" cy="159.0" r="2.20" fill="#dde620"/>
<path d="M787.4 159.0L815.0 152.2" stroke="#303030" stroke-width="0.80" fill="none"/>
<circle cx="787.4" cy="159.0" r="2.20" fill="#dde620"/>
<path d="M762.6 172.9L755.4 145.3" stroke="#303030" stroke-width="0.80" fill="none"/>
<circle cx="762.6" cy="172.9" r="2.20" fill="#dde620"/>
<path d="M773.6 172.9L781.2 145.3" stroke="#303030" stroke-width="0.80" fill="none"/>
<circle cx="773.6" cy="172.9" r="2.20" fill="#dde620"/>
<path d="M718.1 204.9L712.8 178.2" stroke="#303030" stroke-width="0.80" fill="none"/>
<circle cx="718.1" cy="204.9" r="2.20" fill="#dde620"/>
<path d="M818.2 204.9L822.9 178.2" stroke="#303030" stroke-width="0.80" fill="none"/>
<circle cx="818.2" cy="204.9" r="2.20" fill="#dde620"/>
<path d="M689.6 225.3L684.9 198.0" stroke="#303030" stroke-width="0.80" fill="none"/>
<circle cx="689.6" cy="225.3" r="2.20" fill="#dde620"/>
<path d="M847.0 225.3L851.7 198.0" stroke="#303030" stroke-width="0.80" fill="none"/>
<circle cx="847.0" cy="225.3" r="2.20" fill="#dde620"/>
<path d="M749.2 174.5L749.2 183.5" stroke="#303030" stroke-width="0.50" fill="none"/>
<circle cx="749.2" cy="174.5" r="1.30" fill="#d8b428"/>
<path d="M787.4 174.5L787.4 183.5" stroke="#303030" stroke-width="0.50" fill="none"/>
<circle cx="787.4" cy="174.5" r="1.30" fill="#d8b428"/>
<circle cx="763.9" cy="179.2" r="1.40" fill="#dde620"/>
<circle cx="706.2" cy="179.2" r="1.40" fill="#dde620"/>
<circle cx="830.4" cy="179.2" r="1.40" fill="#dde620"/>
<circle cx="732.5" cy="179.8" r="1.40" fill="#dde620"/>
<circle cx="803.7" cy="179.8" r="1.40" fill="#dde620"/>
<path d="M722.0 180.0L743.0 180.0" stroke="#303030" stroke-width="0.50" fill="none"/>
<path d="M793.0 180.0L814.0 180.0" stroke="#303030" stroke-width="0.50" fill="none"/>
<path d="M706.2 179.2L709.0 190.0" stroke="#303030" stroke-width="0.50" fill="none"/>
<path d="M830.4 179.2L827.6 190.0" stroke="#303030" stroke-width="0.50" fill="none"/>
<rect x="723.1" y="184.5" width="18.8" height="17.9" stroke="#303030" stroke-width="0.80" fill="none"/>
<path d="M732.5 184.5L732.5 202.4" stroke="#303030" stroke-width="0.40" fill="none"/>
<path d="M723.1 193.3L741.9 193.3" stroke="#303030" stroke-width="0.40" fill="none"/>
<circle cx="732.5" cy="193.3" r="2.80" fill="#dde620"/>
<rect x="756.0" y="181.4" width="24.2" height="24.1" stroke="#303030" stroke-width="0.80" fill="none"/>
<path d="M768.0 181.4L768.0 205.5" stroke="#303030" stroke-width="0.40" fill="none"/>
<path d="M756.0 193.3L780.2 193.3" stroke="#303030" stroke-width="0.40" fill="none"/>
<circle cx="768.0" cy="193.3" r="3.40" fill="#dde620"/>
<rect x="794.3" y="184.5" width="19.2" height="17.9" stroke="#303030" stroke-width="0.80" fill="none"/>
<path d="M803.7 184.5L803.7 202.4" stroke="#303030" stroke-width="0.40" fill="none"/>
<path d="M794.3 193.3L813.5 193.3" stroke="#303030" stroke-width="0.40" fill="none"/>
<circle cx="803.7" cy="193.3" r="2.80" fill="#dde620"/>
<path d="M703.7 193.7L703.7 212.7" stroke="#303030" stroke-width="0.50" fill="none"/>
<circle cx="703.7" cy="202.7" r="2.30" fill="#dde620"/>
<path d="M832.3 193.7L832.3 212.7" stroke="#303030" stroke-width="0.50" fill="none"/>
<circle cx="832.3" cy="202.7" r="2.30" fill="#dde620"/>
<circle cx="739.7" cy="208.0" r="2.10" fill="#dde620"/>
<circle cx="796.8" cy="208.0" r="2.10" fill="#dde620"/>
<path d="M739.7 208.0L731.0 213.0" stroke="#303030" stroke-width="0.50" fill="none"/>
<path d="M796.8 208.0L805.5 213.0" stroke="#303030" stroke-width="0.50" fill="none"/>
<rect x="749.2" y="210.2" width="18.8" height="18.2" stroke="#303030" stroke-width="0.80" fill="none"/>
<rect x="769.2" y="210.2" width="18.2" height="18.2" stroke="#303030" stroke-width="0.80" fill="none"/>
<path d="M758.6 210.2L758.6 228.4" stroke="#303030" stroke-width="0.40" fill="none"/>
<path d="M778.0 210.2L778.0 228.4" stroke="#303030" stroke-width="0.40" fill="none"/>
<circle cx="758.6" cy="214.6" r="2.50" fill="#dde620"/>
<circle cx="778.0" cy="214.6" r="2.50" fill="#dde620"/>
<path d="M661.3 257.4L689.6 257.4" stroke="#303030" stroke-width="0.80" fill="none"/>
<circle cx="675.1" cy="257.4" r="2.10" fill="#dde620"/>
<path d="M847.0 257.4L875.9 257.4" stroke="#303030" stroke-width="0.80" fill="none"/>
<circle cx="861.1" cy="257.4" r="2.10" fill="#dde620"/>
<path d="M763.0 233.9L763.0 244.0" stroke="#303030" stroke-width="0.50" fill="none"/>
<circle cx="763.0" cy="233.9" r="1.20" fill="#d8b428"/>
<path d="M773.6 233.9L773.6 244.0" stroke="#303030" stroke-width="0.50" fill="none"/>
<circle cx="773.6" cy="233.9" r="1.20" fill="#d8b428"/>
<path d="M748.8 260.9L741.3 233.9" stroke="#303030" stroke-width="0.80" fill="none"/>
<circle cx="748.8" cy="260.9" r="2.10" fill="#dde620"/>
<path d="M760.1 256.5L749.8 230.7" stroke="#303030" stroke-width="0.80" fill="none"/>
<circle cx="760.1" cy="256.5" r="2.10" fill="#dde620"/>
<path d="M776.1 256.5L786.8 230.7" stroke="#303030" stroke-width="0.80" fill="none"/>
<circle cx="776.1" cy="256.5" r="2.10" fill="#dde620"/>
<path d="M787.4 260.9L795.3 233.9" stroke="#303030" stroke-width="0.80" fill="none"/>
<circle cx="787.4" cy="260.9" r="2.10" fill="#dde620"/>
<path d="M738.2 266.2L720.0 244.9" stroke="#303030" stroke-width="0.80" fill="none"/>
<circle cx="738.2" cy="266.2" r="2.10" fill="#dde620"/>
<path d="M798.4 266.2L817.2 244.9" stroke="#303030" stroke-width="0.80" fill="none"/>
<circle cx="798.4" cy="266.2" r="2.10" fill="#dde620"/>
<path d="M731.3 272.1L704.3 267.4" stroke="#303030" stroke-width="0.80" fill="none"/>
<circle cx="731.3" cy="272.1" r="2.10" fill="#dde620"/>
<path d="M805.0 272.1L832.9 267.4" stroke="#303030" stroke-width="0.80" fill="none"/>
<circle cx="805.0" cy="272.1" r="2.10" fill="#dde620"/>
<path d="M738.2 278.4L722.2 297.2" stroke="#303030" stroke-width="0.80" fill="none"/>
<circle cx="738.2" cy="278.4" r="2.10" fill="#dde620"/>
<path d="M798.4 278.4L814.7 297.2" stroke="#303030" stroke-width="0.80" fill="none"/>
<circle cx="798.4" cy="278.4" r="2.10" fill="#dde620"/>
<path d="M749.5 284.7L724.7 299.7" stroke="#303030" stroke-width="0.80" fill="none"/>
<circle cx="749.5" cy="284.7" r="2.10" fill="#dde620"/>
<path d="M786.8 284.7L812.5 299.7" stroke="#303030" stroke-width="0.80" fill="none"/>
<circle cx="786.8" cy="284.7" r="2.10" fill="#dde620"/>
<path d="M759.5 291.0L755.4 318.6" stroke="#303030" stroke-width="0.80" fill="none"/>
<circle cx="759.5" cy="291.0" r="2.10" fill="#dde620"/>
<path d="M777.1 291.0L781.2 318.6" stroke="#303030" stroke-width="0.80" fill="none"/>
<circle cx="777.1" cy="291.0" r="2.10" fill="#dde620"/>
<rect x="759.2" y="264.3" width="18.8" height="17.9" stroke="#303030" stroke-width="0.80" fill="none"/>
<path d="M768.0 264.3L768.0 282.2" stroke="#303030" stroke-width="0.40" fill="none"/>
<path d="M759.2 273.1L778.0 273.1" stroke="#303030" stroke-width="0.40" fill="none"/>
<circle cx="768.0" cy="273.1" r="2.80" fill="#dde620"/>
<path d="M733.2 332.7L740.4 320.8" stroke="#303030" stroke-width="0.50" fill="none" stroke-dasharray="1 1"/>
<circle cx="733.2" cy="332.7" r="2.00" fill="#dde620"/>
<path d="M803.7 332.7L796.5 320.8" stroke="#303030" stroke-width="0.50" fill="none" stroke-dasharray="1 1"/>
<circle cx="803.7" cy="332.7" r="2.00" fill="#dde620"/>
<rect x="758.6" y="325.5" width="19.4" height="35.9" stroke="#303030" stroke-width="0.80" fill="none"/>
<path d="M764.2 325.5L764.2 361.4" stroke="#303030" stroke-width="0.40" fill="none"/>
<path d="M771.7 325.5L771.7 361.4" stroke="#303030" stroke-width="0.40" fill="none"/>
<circle cx="764.2" cy="339.8" r="2.00" fill="#dde620"/>
<circle cx="764.2" cy="358.0" r="2.00" fill="#dde620"/>
<circle cx="771.7" cy="339.8" r="2.00" fill="#dde620"/>
<circle cx="771.7" cy="358.0" r="2.00" fill="#dde620"/>
<rect x="753.9" y="367.6" width="28.8" height="29.8" stroke="#303030" stroke-width="0.80" fill="none"/>
<circle cx="768.0" cy="368.3" r="3.60" fill="#dde620"/>
<path d="M748.2 369.2L748.2 397.4" stroke="#303030" stroke-width="0.60" fill="none"/>
<circle cx="748.8" cy="382.4" r="2.00" fill="#dde620"/>
<path d="M787.4 372.0L787.4 392.0" stroke="#303030" stroke-width="0.50" fill="none"/>
<circle cx="787.4" cy="382.4" r="2.00" fill="#dde620"/>
<path d="M796.8 369.2L796.8 397.4" stroke="#303030" stroke-width="0.60" fill="none"/>
<circle cx="796.8" cy="382.4" r="2.00" fill="#dde620"/>
<path d="M754.2 403.7L782.7 403.7" stroke="#303030" stroke-width="0.70" fill="none"/>
<circle cx="754.2" cy="403.7" r="2.60" fill="#d8b428"/>
<text x="658.2" y="292.8" font-size="8.2" fill="#1c1c1c" stroke="#1c1c1c" stroke-width="0.25" textLength="44.0" lengthAdjust="spacingAndGlyphs" text-anchor="start" font-weight="normal">mouth sticky</text>
<path d="M659.8 300.4L659.8 311.0" stroke="#303030" stroke-width="0.60" fill="none"/>
<path d="M659.8 318.0L659.8 328.6" stroke="#303030" stroke-width="0.60" fill="none"/>
<circle cx="659.8" cy="300.4" r="1.70" fill="#dde620"/>
<circle cx="659.8" cy="328.6" r="1.70" fill="#dde620"/>
<path d="M670.1 300.4L670.1 311.0" stroke="#303030" stroke-width="0.60" fill="none"/>
<path d="M670.1 318.0L670.1 328.6" stroke="#303030" stroke-width="0.60" fill="none"/>
<circle cx="670.1" cy="300.4" r="1.70" fill="#dde620"/>
<circle cx="670.1" cy="328.6" r="1.70" fill="#dde620"/>
<path d="M680.5 300.4L680.5 311.0" stroke="#303030" stroke-width="0.60" fill="none"/>
<path d="M680.5 318.0L680.5 328.6" stroke="#303030" stroke-width="0.60" fill="none"/>
<circle cx="680.5" cy="300.4" r="1.70" fill="#dde620"/>
<circle cx="680.5" cy="328.6" r="1.70" fill="#dde620"/>
<path d="M689.6 300.4L689.6 311.0" stroke="#303030" stroke-width="0.60" fill="none"/>
<path d="M689.6 318.0L689.6 328.6" stroke="#303030" stroke-width="0.60" fill="none"/>
<circle cx="689.6" cy="300.4" r="1.70" fill="#dde620"/>
<circle cx="689.6" cy="328.6" r="1.70" fill="#dde620"/>
<path d="M700.2 300.4L700.2 311.0" stroke="#303030" stroke-width="0.60" fill="none"/>
<path d="M700.2 318.0L700.2 328.6" stroke="#303030" stroke-width="0.60" fill="none"/>
<circle cx="700.2" cy="300.4" r="1.70" fill="#dde620"/>
<circle cx="700.2" cy="328.6" r="1.70" fill="#dde620"/>
<path d="M655.7 314.5L665.0 314.5" stroke="#303030" stroke-width="0.60" fill="none"/>
<path d="M695.0 314.5L704.3 314.5" stroke="#303030" stroke-width="0.60" fill="none"/>
<circle cx="655.7" cy="314.5" r="1.70" fill="#dde620"/>
<circle cx="704.3" cy="314.5" r="1.70" fill="#dde620"/>
<text x="844.5" y="284.3" font-size="7.8" fill="#1c1c1c" stroke="#1c1c1c" stroke-width="0.25" textLength="23.0" lengthAdjust="spacingAndGlyphs" text-anchor="start" font-weight="normal">tongue</text>
<rect x="833.8" y="286.9" width="45.2" height="16.6" stroke="#303030" stroke-width="0.70" fill="none"/>
<rect x="838.0" y="290.5" width="13.0" height="10.5" stroke="#303030" stroke-width="0.40" fill="none"/>
<rect x="852.0" y="290.5" width="12.5" height="10.5" stroke="#303030" stroke-width="0.40" fill="none"/>
<rect x="866.0" y="290.5" width="11.0" height="10.5" stroke="#303030" stroke-width="0.40" fill="none"/>
<circle cx="843.3" cy="296.0" r="1.90" fill="#dde620"/>
<circle cx="858.0" cy="296.0" r="1.90" fill="#dde620"/>
<circle cx="872.4" cy="296.0" r="1.90" fill="#dde620"/>
<circle cx="836.0" cy="296.0" r="0.90" fill="#dde620"/>
<circle cx="850.8" cy="297.8" r="0.90" fill="#dde620"/>
<circle cx="865.2" cy="297.8" r="0.90" fill="#dde620"/>
<circle cx="856.4" cy="289.4" r="0.90" fill="#dde620"/>
<text x="832.0" y="316.6" font-size="7.8" fill="#1c1c1c" stroke="#1c1c1c" stroke-width="0.25" textLength="29.0" lengthAdjust="spacingAndGlyphs" text-anchor="start" font-weight="normal">lips blow</text>
<rect x="830.7" y="319.2" width="31.1" height="15.1" stroke="#303030" stroke-width="0.70" fill="none"/>
<path d="M830.7 334.3L843.3 322.3" stroke="#303030" stroke-width="0.50" fill="none"/>
<path d="M861.8 334.3L848.9 322.3" stroke="#303030" stroke-width="0.50" fill="none"/>
<circle cx="843.3" cy="322.3" r="1.90" fill="#dde620"/>
<circle cx="848.9" cy="322.3" r="1.90" fill="#dde620"/>
<rect x="651.9" y="341.9" width="83.8" height="42.1" stroke="#303030" stroke-width="0.80" fill="none"/>
<rect x="655.0" y="349.4" width="22.6" height="22.9" stroke="#3a3a3a" stroke-width="0.60" fill="none"/>
<path d="M655.0 349.4L677.6 372.3" stroke="#404040" stroke-width="0.42" fill="none"/>
<path d="M677.6 349.4L655.0 372.3" stroke="#404040" stroke-width="0.42" fill="none"/>
<text x="666.3" y="349.2" font-size="4.6" fill="#222" stroke="#222" stroke-width="0.25" textLength="14.0" lengthAdjust="spacingAndGlyphs" text-anchor="middle" font-weight="normal">towards</text>
<circle cx="656.4" cy="352.0" r="1.70" fill="#dde620"/>
<circle cx="656.4" cy="370.2" r="1.70" fill="#dde620"/>
<circle cx="675.3" cy="352.0" r="1.70" fill="#dde620"/>
<circle cx="675.3" cy="370.2" r="1.70" fill="#dde620"/>
<rect x="683.3" y="349.4" width="21.9" height="22.9" stroke="#3a3a3a" stroke-width="0.60" fill="none"/>
<path d="M683.3 349.4L705.2 372.3" stroke="#404040" stroke-width="0.42" fill="none"/>
<path d="M705.2 349.4L683.3 372.3" stroke="#404040" stroke-width="0.42" fill="none"/>
<text x="694.2" y="349.2" font-size="4.6" fill="#222" stroke="#222" stroke-width="0.25" textLength="10.0" lengthAdjust="spacingAndGlyphs" text-anchor="middle" font-weight="normal">purse</text>
<circle cx="684.7" cy="352.0" r="1.70" fill="#dde620"/>
<circle cx="684.7" cy="370.2" r="1.70" fill="#dde620"/>
<circle cx="702.9" cy="352.0" r="1.70" fill="#dde620"/>
<circle cx="702.9" cy="370.2" r="1.70" fill="#dde620"/>
<rect x="710.9" y="349.4" width="22.6" height="22.9" stroke="#3a3a3a" stroke-width="0.60" fill="none"/>
<path d="M710.9 349.4L733.5 372.3" stroke="#404040" stroke-width="0.42" fill="none"/>
<path d="M733.5 349.4L710.9 372.3" stroke="#404040" stroke-width="0.42" fill="none"/>
<text x="722.2" y="349.2" font-size="4.6" fill="#222" stroke="#222" stroke-width="0.25" textLength="12.0" lengthAdjust="spacingAndGlyphs" text-anchor="middle" font-weight="normal">funnel</text>
<circle cx="712.3" cy="352.0" r="1.70" fill="#dde620"/>
<circle cx="712.3" cy="370.2" r="1.70" fill="#dde620"/>
<circle cx="731.2" cy="352.0" r="1.70" fill="#dde620"/>
<circle cx="731.2" cy="370.2" r="1.70" fill="#dde620"/>
<text x="693.5" y="382.0" font-size="7.0" fill="#222" stroke="#222" stroke-width="0.25" textLength="9.0" lengthAdjust="spacingAndGlyphs" text-anchor="middle" font-weight="normal">OH</text>
<text x="656.3" y="393.5" font-size="7.8" fill="#1c1c1c" stroke="#1c1c1c" stroke-width="0.25" textLength="10.5" lengthAdjust="spacingAndGlyphs" text-anchor="start" font-weight="normal">lips</text>
<text x="656.3" y="402.0" font-size="7.8" fill="#1c1c1c" stroke="#1c1c1c" stroke-width="0.25" textLength="13.0" lengthAdjust="spacingAndGlyphs" text-anchor="start" font-weight="normal">bite</text>
<text x="683.3" y="393.5" font-size="7.8" fill="#1c1c1c" stroke="#1c1c1c" stroke-width="0.25" textLength="10.5" lengthAdjust="spacingAndGlyphs" text-anchor="start" font-weight="normal">lips</text>
<text x="683.3" y="402.0" font-size="7.8" fill="#1c1c1c" stroke="#1c1c1c" stroke-width="0.25" textLength="17.5" lengthAdjust="spacingAndGlyphs" text-anchor="start" font-weight="normal">press</text>
<text x="708.4" y="393.5" font-size="7.8" fill="#1c1c1c" stroke="#1c1c1c" stroke-width="0.25" textLength="10.5" lengthAdjust="spacingAndGlyphs" text-anchor="start" font-weight="normal">lips</text>
<text x="708.4" y="402.0" font-size="7.8" fill="#1c1c1c" stroke="#1c1c1c" stroke-width="0.25" textLength="25.0" lengthAdjust="spacingAndGlyphs" text-anchor="start" font-weight="normal">tighten</text>
<rect x="654.1" y="404.3" width="20.4" height="36.1" stroke="#303030" stroke-width="0.60" fill="none"/>
<path d="M659.8 406.9L659.8 438.2" stroke="#303030" stroke-width="0.60" fill="none"/>
<path d="M667.6 406.9L667.6 438.2" stroke="#303030" stroke-width="0.60" fill="none"/>
<circle cx="659.8" cy="406.9" r="1.90" fill="#dde620"/>
<circle cx="659.8" cy="438.2" r="1.90" fill="#dde620"/>
<circle cx="667.6" cy="406.9" r="1.90" fill="#dde620"/>
<circle cx="667.6" cy="438.2" r="1.90" fill="#dde620"/>
<rect x="681.4" y="404.3" width="20.4" height="36.1" stroke="#3a3a3a" stroke-width="0.60" fill="none"/>
<path d="M681.4 404.3L701.8 440.4" stroke="#404040" stroke-width="0.42" fill="none"/>
<path d="M701.8 404.3L681.4 440.4" stroke="#404040" stroke-width="0.42" fill="none"/>
<circle cx="684.9" cy="406.9" r="1.90" fill="#dde620"/>
<circle cx="698.0" cy="406.9" r="1.90" fill="#dde620"/>
<circle cx="684.9" cy="438.2" r="1.50" fill="#0a0a0a"/>
<circle cx="698.0" cy="438.2" r="1.50" fill="#0a0a0a"/>
<rect x="708.4" y="404.3" width="20.4" height="36.1" stroke="#3a3a3a" stroke-width="0.60" fill="none"/>
<path d="M708.4 404.3L728.8 440.4" stroke="#404040" stroke-width="0.42" fill="none"/>
<path d="M728.8 404.3L708.4 440.4" stroke="#404040" stroke-width="0.42" fill="none"/>
<circle cx="712.1" cy="406.9" r="1.90" fill="#dde620"/>
<circle cx="712.1" cy="438.2" r="1.90" fill="#dde620"/>
<circle cx="725.3" cy="406.9" r="1.90" fill="#dde620"/>
<circle cx="725.3" cy="438.2" r="1.90" fill="#dde620"/>
<text x="747.6" y="419.0" font-size="7.8" fill="#1c1c1c" stroke="#1c1c1c" stroke-width="0.25" textLength="41.0" lengthAdjust="spacingAndGlyphs" text-anchor="start" font-weight="normal">neck stretch</text>
<path d="M741.9 430.4L735.7 442.3" stroke="#303030" stroke-width="0.70" fill="none"/>
<circle cx="741.9" cy="430.4" r="2.00" fill="#dde620"/>
<path d="M750.1 424.7L745.1 452.3" stroke="#303030" stroke-width="0.70" fill="none"/>
<circle cx="750.1" cy="424.7" r="2.00" fill="#dde620"/>
<path d="M786.2 424.7L791.5 452.3" stroke="#303030" stroke-width="0.70" fill="none"/>
<circle cx="786.2" cy="424.7" r="2.00" fill="#dde620"/>
<path d="M794.3 430.4L800.6 442.3" stroke="#303030" stroke-width="0.70" fill="none"/>
<circle cx="794.3" cy="430.4" r="2.00" fill="#dde620"/>
<path d="M760.1 424.1L760.1 453.9" stroke="#303030" stroke-width="0.70" fill="none"/>
<circle cx="760.1" cy="439.2" r="2.00" fill="#dde620"/>
<path d="M768.0 424.1L768.0 453.9" stroke="#303030" stroke-width="0.90" fill="none"/>
<circle cx="768.0" cy="439.2" r="2.00" fill="#dde620"/>
<path d="M776.1 424.1L776.1 453.9" stroke="#303030" stroke-width="1.40" fill="none"/>
<circle cx="776.1" cy="439.2" r="2.00" fill="#dde620"/>
<path d="M753.9 459.9L782.7 459.9" stroke="#303030" stroke-width="0.80" fill="none"/>
<circle cx="753.9" cy="459.9" r="1.80" fill="#dde620"/>
<rect x="752.8" y="465.7" width="31.0" height="6.9" stroke="none" stroke-width="0.00" fill="#d6e612"/>
<rect x="814.1" y="341.9" width="65.9" height="60.9" stroke="#303030" stroke-width="0.80" fill="none"/>
<text x="816.6" y="349.0" font-size="7.0" fill="#1c1c1c" stroke="#1c1c1c" stroke-width="0.25" textLength="9.5" lengthAdjust="spacingAndGlyphs" text-anchor="start" font-weight="normal">lips</text>
<text x="816.6" y="355.2" font-size="7.0" fill="#1c1c1c" stroke="#1c1c1c" stroke-width="0.25" textLength="28.0" lengthAdjust="spacingAndGlyphs" text-anchor="start" font-weight="normal">together</text>
<text x="852.7" y="349.0" font-size="7.0" fill="#1c1c1c" stroke="#1c1c1c" stroke-width="0.25" textLength="20.5" lengthAdjust="spacingAndGlyphs" text-anchor="start" font-weight="normal">mouth</text>
<text x="852.7" y="355.2" font-size="7.0" fill="#1c1c1c" stroke="#1c1c1c" stroke-width="0.25" textLength="17.0" lengthAdjust="spacingAndGlyphs" text-anchor="start" font-weight="normal">press</text>
<rect x="819.4" y="357.6" width="20.4" height="36.7" stroke="#3a3a3a" stroke-width="0.60" fill="none"/>
<path d="M819.4 357.6L839.8 394.3" stroke="#404040" stroke-width="0.42" fill="none"/>
<path d="M839.8 357.6L819.4 394.3" stroke="#404040" stroke-width="0.42" fill="none"/>
<circle cx="822.9" cy="360.4" r="1.90" fill="#dde620"/>
<circle cx="822.9" cy="391.8" r="1.90" fill="#dde620"/>
<circle cx="836.0" cy="360.4" r="1.90" fill="#dde620"/>
<circle cx="836.0" cy="391.8" r="1.90" fill="#dde620"/>
<rect x="853.9" y="357.6" width="19.8" height="36.7" stroke="#3a3a3a" stroke-width="0.60" fill="none"/>
<path d="M853.9 357.6L873.7 394.3" stroke="#404040" stroke-width="0.42" fill="none"/>
<path d="M873.7 357.6L853.9 394.3" stroke="#404040" stroke-width="0.42" fill="none"/>
<circle cx="857.4" cy="360.4" r="1.90" fill="#dde620"/>
<circle cx="857.4" cy="391.8" r="1.90" fill="#dde620"/>
<circle cx="869.9" cy="360.4" r="1.90" fill="#dde620"/>
<circle cx="869.9" cy="391.8" r="1.90" fill="#dde620"/>
<text x="823.5" y="400.8" font-size="6.6" fill="#1c1c1c" stroke="#1c1c1c" stroke-width="0.25" textLength="45.5" lengthAdjust="spacingAndGlyphs" text-anchor="start" font-weight="normal">MOUTH SUCK</text>
<text x="827.6" y="425.2" font-size="6.8" fill="#1c1c1c" stroke="#1c1c1c" stroke-width="0.25" textLength="34.5" lengthAdjust="spacingAndGlyphs" text-anchor="start" font-weight="normal">SWITCHES</text>
<rect x="825.7" y="426.6" width="38.0" height="25.1" stroke="#303030" stroke-width="0.80" fill="none"/>
<path d="M830.7 432.3L860.2 432.3" stroke="#303030" stroke-width="0.70" fill="none"/>
<path d="M830.7 444.5L860.2 444.5" stroke="#303030" stroke-width="0.70" fill="none"/>
<path d="M830.7 430.5L830.7 434.0" stroke="#303030" stroke-width="0.60" fill="none"/>
<circle cx="860.2" cy="432.3" r="1.90" fill="#d8c020"/>
<circle cx="830.7" cy="444.5" r="1.90" fill="#d8c020"/>
<text x="653.2" y="469.2" font-size="7.4" fill="#d8d820" stroke="#d8d820" stroke-width="0.25" textLength="26.0" lengthAdjust="spacingAndGlyphs" text-anchor="start" font-weight="normal">rig logic</text>
<text x="828.8" y="469.2" font-size="7.4" fill="#dfe21c" stroke="#dfe21c" stroke-width="0.25" textLength="50.0" lengthAdjust="spacingAndGlyphs" text-anchor="start" font-weight="normal">WMmultipliers</text>
<path d="M950.0 325.4C948.5 325.2 943.8 325.0 941.0 324.4C938.2 323.8 935.5 322.9 933.0 321.6C930.5 320.3 928.2 318.3 926.0 316.5C923.8 314.7 922.5 314.0 919.7 310.8C916.9 307.6 912.4 301.9 909.0 297.4C905.6 292.9 903.2 287.7 899.6 284.0C896.0 280.3 889.9 278.2 887.5 275.0C885.1 271.8 886.0 268.4 885.2 264.6C884.4 260.8 883.3 255.1 882.6 252.0C881.9 248.9 881.6 247.9 881.0 246.0C880.4 244.1 879.9 241.9 878.8 240.5C877.7 239.1 875.9 238.8 874.5 237.5C873.1 236.2 871.6 234.8 870.5 233.0C869.4 231.2 868.4 228.8 867.6 227.0C866.9 225.2 866.5 223.8 866.0 222.0C865.5 220.2 865.1 218.4 864.8 216.2C864.5 214.0 864.2 211.5 864.0 209.0C863.8 206.5 863.6 203.7 863.5 201.0C863.4 198.3 863.5 195.7 863.6 193.0C863.7 190.3 863.8 186.9 864.2 185.0C864.6 183.1 865.2 182.2 866.0 181.5C866.8 180.8 867.9 180.7 869.0 180.8C870.1 180.9 871.4 182.1 872.5 182.0C873.6 181.9 874.9 181.2 875.8 180.0C876.6 178.8 877.1 177.2 877.6 175.0C878.1 172.8 878.2 169.8 878.5 167.0C878.8 164.2 878.9 161.4 879.2 158.0C879.5 154.6 879.8 149.8 880.3 146.5C880.8 143.2 881.1 141.0 882.0 138.0C882.9 135.0 883.9 131.7 885.4 128.6C886.9 125.5 888.9 122.5 891.0 119.5C893.1 116.5 895.4 113.6 898.2 110.8C901.0 108.0 904.2 105.0 908.0 102.5C911.8 100.0 915.8 97.5 921.0 95.5C926.2 93.5 932.8 91.7 939.0 90.5C945.2 89.3 951.7 88.4 958.0 88.4C964.3 88.4 970.8 89.3 977.0 90.5C983.2 91.7 989.8 93.5 995.0 95.5C1000.2 97.5 1004.2 100.0 1008.0 102.5C1011.8 105.0 1015.0 108.0 1017.8 110.8C1020.6 113.6 1022.9 116.5 1025.0 119.5C1027.1 122.5 1029.1 125.5 1030.6 128.6C1032.1 131.7 1033.2 135.0 1034.0 138.0C1034.8 141.0 1035.2 143.2 1035.7 146.5C1036.2 149.8 1036.6 154.6 1036.8 158.0C1037.0 161.4 1036.9 164.3 1037.0 167.0C1037.1 169.7 1037.0 172.2 1037.5 174.0C1038.0 175.8 1038.9 176.8 1040.0 178.0C1041.1 179.2 1042.8 179.3 1044.0 181.0C1045.2 182.7 1046.5 183.2 1047.0 188.0C1047.5 192.8 1047.3 203.3 1047.0 210.0C1046.7 216.7 1045.8 223.3 1045.0 228.0C1044.2 232.7 1043.0 234.3 1042.0 238.0C1041.0 241.7 1040.3 245.7 1039.0 250.0C1037.7 254.3 1035.8 259.5 1034.0 264.0C1032.2 268.5 1030.9 273.7 1028.0 277.0C1025.1 280.3 1019.9 280.6 1016.4 284.0C1012.9 287.4 1010.4 292.9 1007.0 297.4C1003.6 301.9 999.1 307.6 996.3 310.8C993.5 314.0 992.2 314.7 990.0 316.5C987.8 318.3 985.5 320.3 983.0 321.6C980.5 322.9 977.8 323.8 975.0 324.4C972.2 325.0 967.5 325.2 966.0 325.4z" stroke="#161616" stroke-width="1.4" fill="none" stroke-linejoin="round"/>
<ellipse cx="921.0" cy="163.800" rx="29.300" ry="19.600" stroke="#303030" stroke-width="0.800" fill="none"/>
<ellipse cx="994.6" cy="163.800" rx="29.300" ry="19.600" stroke="#303030" stroke-width="0.800" fill="none"/>
<path d="M920.2 144.2L920.2 158.0" stroke="#303030" stroke-width="0.80" fill="none"/>
<circle cx="920.2" cy="144.2" r="2.20" fill="#dde620"/>
<path d="M994.1 144.2L994.1 158.0" stroke="#303030" stroke-width="0.80" fill="none"/>
<circle cx="994.1" cy="144.2" r="2.20" fill="#dde620"/>
<path d="M907.7 155.4L907.7 160.4" stroke="#303030" stroke-width="0.40" fill="none"/>
<circle cx="907.7" cy="155.4" r="1.10" fill="#dde620"/>
<path d="M907.7 172.7L907.7 177.7" stroke="#303030" stroke-width="0.40" fill="none"/>
<circle cx="907.7" cy="172.7" r="1.10" fill="#dde620"/>
<path d="M929.1 161.0L929.1 166.0" stroke="#303030" stroke-width="0.40" fill="none"/>
<circle cx="929.1" cy="161.0" r="1.10" fill="#dde620"/>
<path d="M935.8 161.0L935.8 166.0" stroke="#303030" stroke-width="0.40" fill="none"/>
<circle cx="935.8" cy="161.0" r="1.10" fill="#dde620"/>
<path d="M978.8 161.0L978.8 166.0" stroke="#303030" stroke-width="0.40" fill="none"/>
<circle cx="978.8" cy="161.0" r="1.10" fill="#dde620"/>
<path d="M986.0 161.0L986.0 166.0" stroke="#303030" stroke-width="0.40" fill="none"/>
<circle cx="986.0" cy="161.0" r="1.10" fill="#dde620"/>
<path d="M1007.1 155.4L1007.1 160.4" stroke="#303030" stroke-width="0.40" fill="none"/>
<circle cx="1007.1" cy="155.4" r="1.10" fill="#dde620"/>
<path d="M1007.1 172.7L1007.1 177.7" stroke="#303030" stroke-width="0.40" fill="none"/>
<circle cx="1007.1" cy="172.7" r="1.10" fill="#dde620"/>
<text x="943.2" y="149.5" font-size="5.4" fill="#202020" stroke="#202020" stroke-width="0.25" textLength="28.8" lengthAdjust="spacingAndGlyphs" text-anchor="start" font-weight="normal">face scrunch</text>
<text x="924.8" y="153.6" font-size="3.6" fill="#202020" stroke="#202020" stroke-width="0.25" textLength="14.5" lengthAdjust="spacingAndGlyphs" text-anchor="start" font-weight="normal">eyelashes</text>
<text x="975.0" y="153.6" font-size="3.6" fill="#202020" stroke="#202020" stroke-width="0.25" textLength="14.5" lengthAdjust="spacingAndGlyphs" text-anchor="start" font-weight="normal">eyelashes</text>
<text x="901.9" y="164.6" font-size="3.6" fill="#202020" stroke="#202020" stroke-width="0.25" textLength="11.0" lengthAdjust="spacingAndGlyphs" text-anchor="start" font-weight="normal">eyelids</text>
<text x="1001.3" y="164.6" font-size="3.6" fill="#202020" stroke="#202020" stroke-width="0.25" textLength="11.0" lengthAdjust="spacingAndGlyphs" text-anchor="start" font-weight="normal">eyelids</text>
<text x="946.5" y="195.7" font-size="5.2" fill="#202020" stroke="#202020" stroke-width="0.25" textLength="22.4" lengthAdjust="spacingAndGlyphs" text-anchor="start" font-weight="normal">nasolabial</text>
<path d="M936.3 188.5L943.2 201.1" stroke="#303030" stroke-width="0.70" fill="none"/>
<path d="M979.1 188.5L972.0 201.1" stroke="#303030" stroke-width="0.70" fill="none"/>
<circle cx="943.2" cy="201.1" r="2.30" fill="#dde620"/>
<circle cx="972.0" cy="201.1" r="2.30" fill="#dde620"/>
<text x="884.0" y="189.3" font-size="5.2" fill="#202020" stroke="#202020" stroke-width="0.25" textLength="8.0" lengthAdjust="spacingAndGlyphs" text-anchor="start" font-weight="normal">lips</text>
<text x="884.0" y="194.2" font-size="5.2" fill="#202020" stroke="#202020" stroke-width="0.25" textLength="19.0" lengthAdjust="spacingAndGlyphs" text-anchor="start" font-weight="normal">towards</text>
<text x="884.0" y="199.1" font-size="5.2" fill="#202020" stroke="#202020" stroke-width="0.25" textLength="12.0" lengthAdjust="spacingAndGlyphs" text-anchor="start" font-weight="normal">teeth</text>
<rect x="885.3" y="201.9" width="14.7" height="25.5" stroke="#3a3a3a" stroke-width="0.60" fill="none"/>
<path d="M885.3 201.9L900.0 227.4" stroke="#404040" stroke-width="0.42" fill="none"/>
<path d="M900.0 201.9L885.3 227.4" stroke="#404040" stroke-width="0.42" fill="none"/>
<circle cx="887.8" cy="203.9" r="1.70" fill="#dde620"/>
<circle cx="887.8" cy="225.6" r="1.70" fill="#dde620"/>
<circle cx="896.8" cy="203.9" r="1.70" fill="#dde620"/>
<circle cx="896.8" cy="225.6" r="1.70" fill="#dde620"/>
<text x="912.0" y="194.6" font-size="5.6" fill="#222" stroke="#222" stroke-width="0.25" textLength="12.7" lengthAdjust="spacingAndGlyphs" text-anchor="start" font-weight="normal">teeth</text>
<path d="M912.0 195.6L924.7 195.6" stroke="#303030" stroke-width="0.40" fill="none"/>
<rect x="912.0" y="197.5" width="12.8" height="10.7" stroke="#303030" stroke-width="0.60" fill="none"/>
<rect x="912.0" y="210.8" width="12.8" height="11.5" stroke="#303030" stroke-width="0.60" fill="none"/>
<circle cx="918.4" cy="202.6" r="2.00" fill="#dde620"/>
<circle cx="918.4" cy="216.6" r="2.00" fill="#dde620"/>
<circle cx="910.0" cy="202.6" r="0.80" fill="#dde620"/>
<circle cx="910.0" cy="216.6" r="0.80" fill="#dde620"/>
<text x="1006.4" y="205.8" font-size="5.2" fill="#202020" stroke="#202020" stroke-width="0.25" textLength="20.0" lengthAdjust="spacingAndGlyphs" text-anchor="start" font-weight="normal">lips shift</text>
<rect x="992.4" y="208.7" width="9.6" height="10.2" stroke="#303030" stroke-width="0.60" fill="none"/>
<circle cx="996.7" cy="213.8" r="1.70" fill="#dde620"/>
<rect x="1005.1" y="208.2" width="23.5" height="11.5" stroke="#303030" stroke-width="0.60" fill="none"/>
<path d="M1005.1 212.0L1028.6 212.0" stroke="#303030" stroke-width="0.40" fill="none"/>
<path d="M1005.1 216.0L1028.6 216.0" stroke="#303030" stroke-width="0.40" fill="none"/>
<circle cx="1016.6" cy="210.8" r="1.70" fill="#dde620"/>
<circle cx="1016.6" cy="216.4" r="1.70" fill="#dde620"/>
<rect x="1032.6" y="208.7" width="9.4" height="10.2" stroke="#303030" stroke-width="0.60" fill="none"/>
<circle cx="1036.2" cy="213.8" r="1.70" fill="#dde620"/>
<text x="908.7" y="231.0" font-size="5.0" fill="#202020" stroke="#202020" stroke-width="0.25" textLength="20.0" lengthAdjust="spacingAndGlyphs" text-anchor="start" font-weight="normal">thickness</text>
<text x="945.2" y="231.0" font-size="5.0" fill="#202020" stroke="#202020" stroke-width="0.25" textLength="6.0" lengthAdjust="spacingAndGlyphs" text-anchor="start" font-weight="normal">roll</text>
<text x="958.0" y="226.6" font-size="5.0" fill="#202020" stroke="#202020" stroke-width="0.25" textLength="13.0" lengthAdjust="spacingAndGlyphs" text-anchor="start" font-weight="normal">corner</text>
<text x="958.0" y="231.0" font-size="5.0" fill="#202020" stroke="#202020" stroke-width="0.25" textLength="21.0" lengthAdjust="spacingAndGlyphs" text-anchor="start" font-weight="normal">sharpness</text>
<rect x="903.1" y="232.5" width="14.8" height="50.4" stroke="#303030" stroke-width="0.70" fill="none"/>
<path d="M907.5 235.0L907.5 257.0" stroke="#303030" stroke-width="0.60" fill="none"/>
<path d="M907.5 259.5L907.5 281.0" stroke="#303030" stroke-width="0.60" fill="none"/>
<circle cx="907.5" cy="246.0" r="1.70" fill="#dde620"/>
<circle cx="907.5" cy="270.2" r="1.70" fill="#dde620"/>
<path d="M914.1 235.0L914.1 257.0" stroke="#303030" stroke-width="0.60" fill="none"/>
<path d="M914.1 259.5L914.1 281.0" stroke="#303030" stroke-width="0.60" fill="none"/>
<circle cx="914.1" cy="246.0" r="1.70" fill="#dde620"/>
<circle cx="914.1" cy="270.2" r="1.70" fill="#dde620"/>
<rect x="919.7" y="232.5" width="14.8" height="50.4" stroke="#303030" stroke-width="0.70" fill="none"/>
<path d="M923.5 235.0L923.5 257.0" stroke="#303030" stroke-width="0.60" fill="none"/>
<path d="M923.5 259.5L923.5 281.0" stroke="#303030" stroke-width="0.60" fill="none"/>
<circle cx="923.5" cy="246.0" r="1.70" fill="#dde620"/>
<circle cx="923.5" cy="270.2" r="1.70" fill="#dde620"/>
<path d="M930.4 235.0L930.4 257.0" stroke="#303030" stroke-width="0.60" fill="none"/>
<path d="M930.4 259.5L930.4 281.0" stroke="#303030" stroke-width="0.60" fill="none"/>
<circle cx="930.4" cy="246.0" r="1.70" fill="#dde620"/>
<circle cx="930.4" cy="270.2" r="1.70" fill="#dde620"/>
<rect x="940.6" y="232.5" width="15.3" height="50.4" stroke="#303030" stroke-width="0.70" fill="none"/>
<path d="M945.5 235.0L945.5 257.0" stroke="#303030" stroke-width="0.60" fill="none"/>
<path d="M945.5 259.5L945.5 281.0" stroke="#303030" stroke-width="0.60" fill="none"/>
<circle cx="945.5" cy="246.0" r="1.70" fill="#dde620"/>
<circle cx="945.5" cy="270.2" r="1.70" fill="#dde620"/>
<path d="M952.1 235.0L952.1 257.0" stroke="#303030" stroke-width="0.60" fill="none"/>
<path d="M952.1 259.5L952.1 281.0" stroke="#303030" stroke-width="0.60" fill="none"/>
<circle cx="952.1" cy="246.0" r="1.70" fill="#dde620"/>
<circle cx="952.1" cy="270.2" r="1.70" fill="#dde620"/>
<rect x="961.3" y="232.5" width="15.3" height="50.4" stroke="#303030" stroke-width="0.70" fill="none"/>
<path d="M964.6 235.0L964.6 257.0" stroke="#303030" stroke-width="0.60" fill="none"/>
<path d="M964.6 259.5L964.6 281.0" stroke="#303030" stroke-width="0.60" fill="none"/>
<circle cx="964.6" cy="246.0" r="1.70" fill="#dde620"/>
<circle cx="964.6" cy="270.2" r="1.70" fill="#dde620"/>
<path d="M972.7 235.0L972.7 257.0" stroke="#303030" stroke-width="0.60" fill="none"/>
<path d="M972.7 259.5L972.7 281.0" stroke="#303030" stroke-width="0.60" fill="none"/>
<circle cx="972.7" cy="246.0" r="1.70" fill="#dde620"/>
<circle cx="972.7" cy="270.2" r="1.70" fill="#dde620"/>
<text x="884.5" y="239.0" font-size="4.6" fill="#202020" stroke="#202020" stroke-width="0.25" textLength="11.5" lengthAdjust="spacingAndGlyphs" text-anchor="start" font-weight="normal">tongue</text>
<circle cx="891.7" cy="246.5" r="0.90" fill="#dde620"/>
<text x="984.0" y="239.6" font-size="6.2" fill="#202020" stroke="#202020" stroke-width="0.25" textLength="35.0" lengthAdjust="spacingAndGlyphs" text-anchor="start" font-weight="normal">lips push-pull</text>
<rect x="984.0" y="241.4" width="34.6" height="33.1" stroke="#3a3a3a" stroke-width="0.70" fill="none"/>
<path d="M984.0 241.4L1018.6 274.5" stroke="#404040" stroke-width="0.49" fill="none"/>
<path d="M1018.6 241.4L984.0 274.5" stroke="#404040" stroke-width="0.49" fill="none"/>
<circle cx="992.4" cy="249.8" r="1.70" fill="#dde620"/>
<circle cx="1009.7" cy="249.8" r="1.70" fill="#dde620"/>
<circle cx="992.4" cy="266.1" r="1.70" fill="#dde620"/>
<circle cx="1010.2" cy="266.1" r="1.70" fill="#dde620"/>
<text x="923.4" y="305.5" font-size="14.6" fill="#1a1a1a" stroke="#1a1a1a" stroke-width="0.25" textLength="69.3" lengthAdjust="spacingAndGlyphs" text-anchor="start" font-weight="normal">TWEAKERS</text>
<rect x="942.5" y="315.0" width="30.4" height="7.1" stroke="none" stroke-width="0.00" fill="#d6e612"/>
<rect x="943.5" y="396.1" width="101.5" height="37.7" stroke="#303030" stroke-width="0.80" fill="none"/>
<text x="953.9" y="409.0" font-size="6.8" fill="#1e1e1e" stroke="#1e1e1e" stroke-width="0.25" textLength="64.0" lengthAdjust="spacingAndGlyphs" text-anchor="start" font-weight="normal">face GUI follow head</text>
<text x="953.9" y="421.6" font-size="6.8" fill="#1e1e1e" stroke="#1e1e1e" stroke-width="0.25" textLength="64.0" lengthAdjust="spacingAndGlyphs" text-anchor="start" font-weight="normal">eyes aim follow head</text>
<path d="M1025.9 407.0L1045.0 407.0" stroke="#303030" stroke-width="0.70" fill="none"/>
<path d="M1025.9 419.6L1045.0 419.6" stroke="#303030" stroke-width="0.70" fill="none"/>
<circle cx="1025.9" cy="407.0" r="1.80" fill="#d8c020"/>
<circle cx="1025.9" cy="419.6" r="1.80" fill="#d8c020"/>
<rect x="988.2" y="427.2" width="30.6" height="6.6" stroke="none" stroke-width="0.00" fill="#d6e612"/>
<path d="M882.4 490.500l23 1.500M883.4 493l24 -0.500M882.4 495.500l22 1M885.4 497.500l20 -1.500" stroke="#c4341e" stroke-width="1.100" fill="none"/>
<path d="M915.3 490.500l23 1.500M916.3 493l24 -0.500M915.3 495.500l22 1M918.3 497.500l20 -1.500" stroke="#c4341e" stroke-width="1.100" fill="none"/>
<path d="M961 486l0.500 12M964 484.500l0.500 18M967.500 486l0 13M963 494l3 -2" stroke="#c4341e" stroke-width="1.100" fill="none"/>
</g>
<text x="194" y="479" font-size="6.500" font-weight="bold" fill="#22c832" font-family="Liberation Sans,sans-serif">Y</text>
<path d="M196.500 480.500v7.500" stroke="#5aa0ff" stroke-width="1"/><path d="M194.800 484v4" stroke="#2244cc" stroke-width="0.800"/>
<path d="M197 488h6" stroke="#8a1818" stroke-width="0.8"/>
<text x="204.500" y="488.700" font-size="6.500" font-weight="bold" fill="#e02020" font-family="Liberation Sans,sans-serif">x</text>
<text x="605" y="500.300" font-size="6.900" font-weight="bold" fill="#f4f4f4" text-anchor="middle" textLength="39" lengthAdjust="spacingAndGlyphs" font-family="Liberation Sans,sans-serif">fcs_cam1 -Z</text>
</svg><!-- V1 -->
  </div>
</div>
<div id="bottom" class="abs"></div><div id="bottom2" class="abs"></div>
</body>
</html>
